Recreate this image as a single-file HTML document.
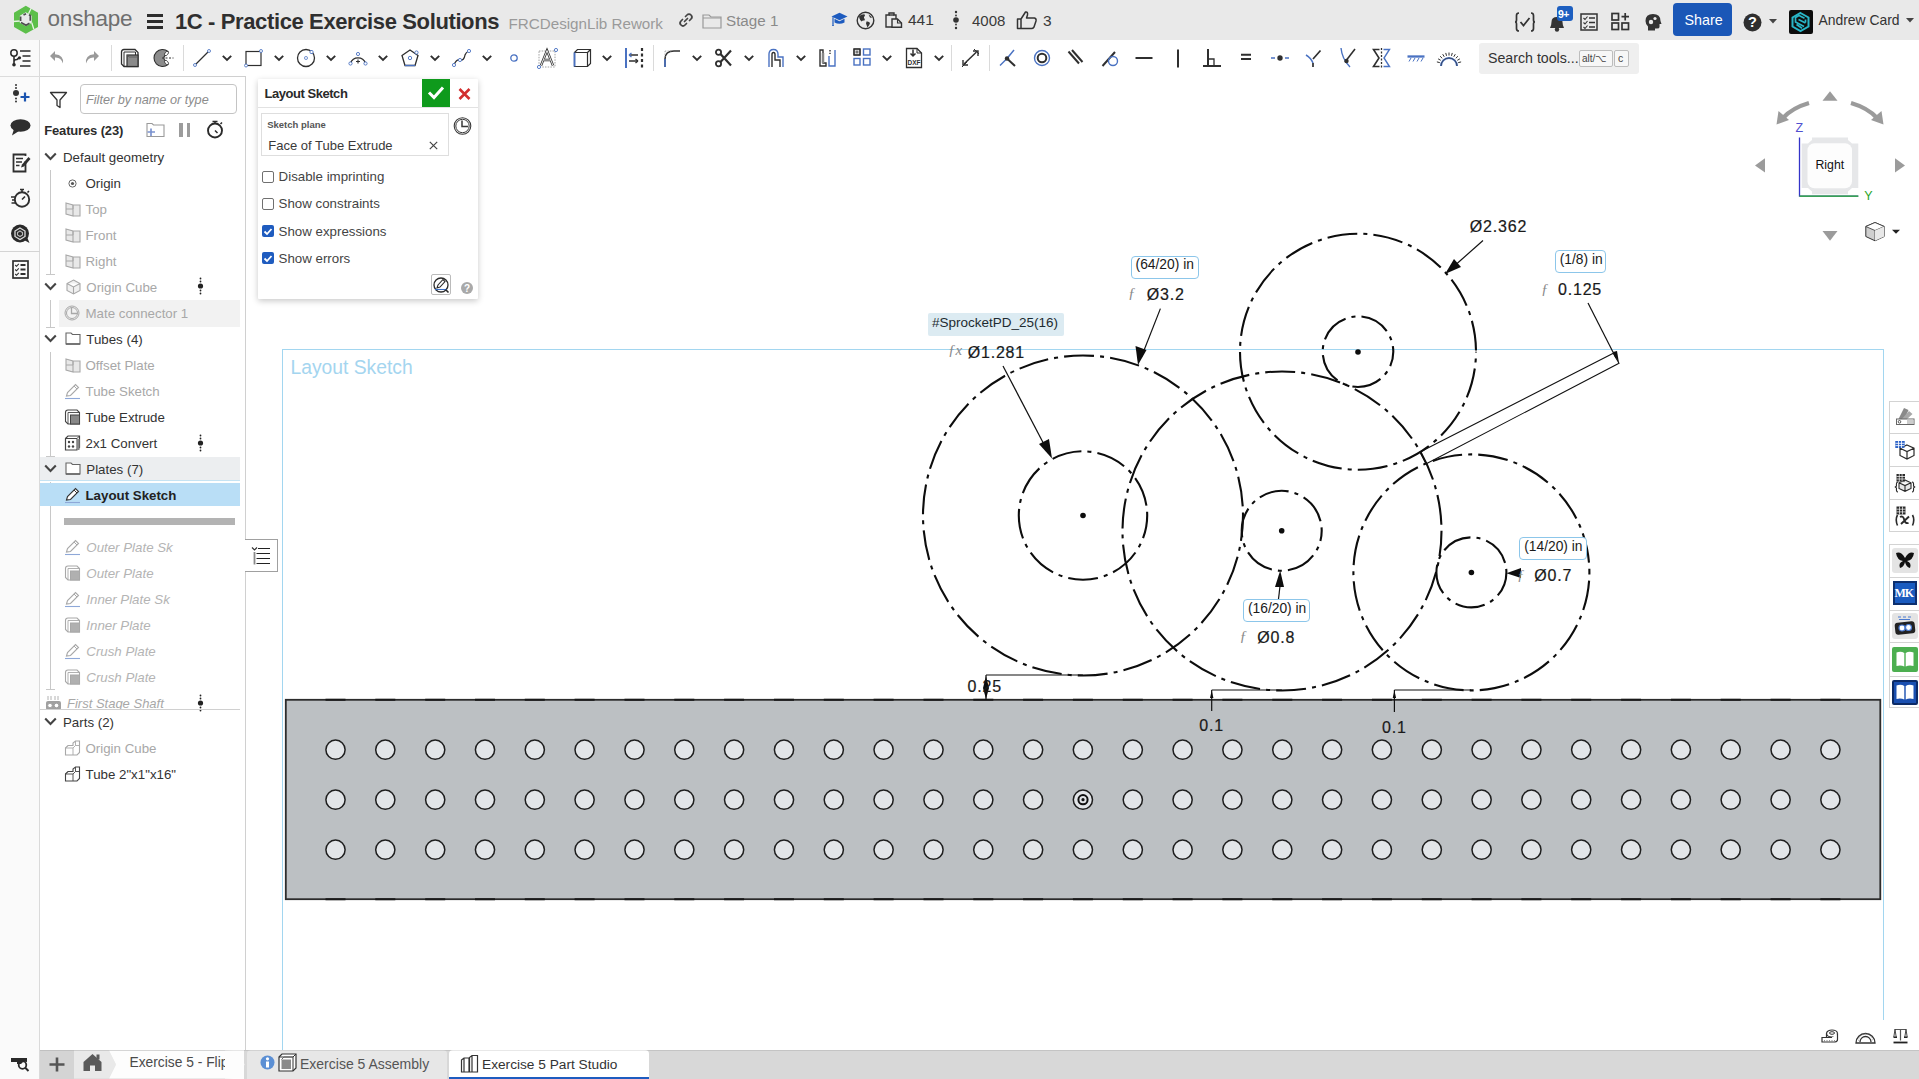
<!DOCTYPE html>
<html><head><meta charset="utf-8">
<style>
*{box-sizing:border-box;margin:0;padding:0}
html,body{width:1919px;height:1079px;overflow:hidden;background:#fff;font-family:"Liberation Sans",sans-serif;color:#333}
.a{position:absolute}
.t{position:absolute;white-space:nowrap;line-height:1}
svg{position:absolute;overflow:visible}
.dimv{font-size:16px;color:#1a1a1a;letter-spacing:0.8px;-webkit-text-stroke:0.2px #1a1a1a;margin-left:-1px}
.dime{font-size:13.8px;color:#1a1a1a}
.dimf{font-size:15px;color:#8a8a8a;font-family:"Liberation Serif",serif;font-style:italic}
.exbox{background:#fff;border:1.3px solid #8cc6ea;border-radius:4px}

</style></head><body>
<!-- top bar -->
<div class="a" style="left:0;top:0;width:1919px;height:40px;background:#e9e9e9"></div>
<!-- logo -->
<svg style="left:8px;top:2px" width="36" height="36" viewBox="0 0 36 36">
<path d="M17.8 3.7 L30 10.7 V25 L17.8 31.7 L6 25 V10.7 Z M17.8 10.2 L23.8 13.7 V20.8 L17.8 24.3 L11.8 20.8 V13.7 Z" fill="#5cbf4a" fill-rule="evenodd"/>
<path d="M20.5 11.7 L23.2 6.3 M23.8 20.8 L25.8 27.2 M11.8 19 L5 19.5" stroke="#e8f5e4" stroke-width="1.3"/>
<path d="M15.5 13 L18 11.7 M21 12.7 L22.3 13.5 V18.7 M21.5 21.3 L18 23.2 L13 20.5 M12.6 19 V14.5" fill="none" stroke="#4e4e4e" stroke-width="1.7"/>
</svg>
<div class="t" style="left:47.5px;top:7.5px;font-size:22.5px;color:#6f6f6f;letter-spacing:-0.2px">onshape</div>
<!-- hamburger -->
<div class="a" style="left:147px;top:14px;width:16px;height:3px;background:#2d2d2d"></div>
<div class="a" style="left:147px;top:19.5px;width:16px;height:3px;background:#2d2d2d"></div>
<div class="a" style="left:147px;top:25.5px;width:16px;height:3px;background:#2d2d2d"></div>
<div class="t" style="left:175px;top:11px;font-size:22px;font-weight:bold;color:#2f2f2f;letter-spacing:-0.38px">1C - Practice Exercise Solutions</div>
<div class="t" style="left:508.5px;top:16px;font-size:15.2px;color:#9a9a9a">FRCDesignLib Rework</div>
<!-- link icon -->
<svg style="left:678px;top:12px" width="16" height="16" viewBox="0 0 16 16">
<g fill="none" stroke="#444" stroke-width="1.7" stroke-linecap="round">
<path d="M6.5 9.5 L9.5 6.5"/>
<path d="M7.5 4.5 L9 3 A2.5 2.5 0 0 1 13 7 L11.5 8.5"/>
<path d="M8.5 11.5 L7 13 A2.5 2.5 0 0 1 3 9 L4.5 7.5"/>
</g></svg>
<!-- folder -->
<svg style="left:702px;top:13px" width="20" height="16" viewBox="0 0 20 16">
<path d="M1 2 H7 L9 4 H19 V15 H1 Z" fill="none" stroke="#999" stroke-width="1.2"/>
<path d="M1 5 H19" stroke="#999" stroke-width="1"/>
</svg>
<div class="t" style="left:726px;top:13px;font-size:15.2px;color:#8a8a8a">Stage 1</div>
<!-- grad cap -->
<svg style="left:831px;top:12px" width="17" height="15" viewBox="0 0 17 15">
<path d="M8.5 0.8 L16.5 4.5 L8.5 8.2 L0.5 4.5 Z" fill="#1d5bbf"/>
<path d="M3.5 6.8 V10.5 Q8.5 13 13.5 10.5 V6.8 L8.5 9.3 Z" fill="#1d5bbf"/>
<path d="M2 5.2 V12.5" stroke="#1d5bbf" stroke-width="1.2"/><path d="M1 14 L2 11.5 L3 14 Z" fill="#1d5bbf"/>
</svg>
<!-- globe -->
<svg style="left:856px;top:11px" width="19" height="19" viewBox="0 0 19 19">
<circle cx="9.5" cy="9.5" r="8.3" fill="none" stroke="#333" stroke-width="1.4"/>
<path d="M3 5.5 Q5 3 8.5 3.2 L9 5 Q7.5 5.5 8 7 Q9.5 8 8.5 9.5 Q6.5 9 5.5 10.5 Q4 9 3.5 7.5 Z" fill="#333"/>
<path d="M10.5 10.5 Q13 10 14 12 Q13.5 14.5 11.5 16.5 Q10.5 14 10 12.5 Z M12.5 3.5 Q15 4.5 16 7 L14 6.5 Z" fill="#333"/>
</svg>
<!-- copies icon -->
<svg style="left:884.5px;top:12px" width="18" height="16" viewBox="0 0 18 16">
<path d="M1 3 H4 V1 H9 V3 H11 V15 H1 Z" fill="none" stroke="#333" stroke-width="1.4"/>
<path d="M4 3 H9" stroke="#333" stroke-width="1.4"/>
<path d="M7 7 H12.5 L16.5 11 V15.3 H7 Z" fill="#e9e9e9" stroke="#333" stroke-width="1.4"/>
<path d="M12.5 7 V11 H16.5" fill="none" stroke="#333" stroke-width="1.1"/>
</svg>
<div class="t" style="left:908px;top:12px;font-size:15.5px;color:#3a3a3a">441</div>
<!-- vertical dots -->
<svg style="left:952px;top:10px" width="8" height="20" viewBox="0 0 8 20">
<circle cx="4" cy="2" r="1.2" fill="#333"/><circle cx="4" cy="10" r="2.8" fill="#333"/><circle cx="4" cy="18" r="1.2" fill="#333"/>
<circle cx="4" cy="5.5" r="0.9" fill="#333"/><circle cx="4" cy="14.5" r="0.9" fill="#333"/>
</svg>
<div class="t" style="left:972px;top:12.5px;font-size:15px;color:#3a3a3a">4008</div>
<!-- thumb -->
<svg style="left:1016px;top:10px" width="22" height="20" viewBox="0 0 22 20">
<path d="M1.5 9 H5 V18.5 H1.5 Z M5 9 L9.5 2 Q12 1.5 11.5 5 L10.5 8 H18.5 Q20.5 8.5 20 11 L18 17 Q17 18.5 15.5 18.5 H5" fill="none" stroke="#333" stroke-width="1.5" stroke-linejoin="round"/>
</svg>
<div class="t" style="left:1043px;top:12.5px;font-size:15.5px;color:#3a3a3a">3</div>

<!-- right side -->
<svg style="left:1514px;top:12px" width="22" height="20" viewBox="0 0 22 20"><path d="M5 1 Q2.5 1 2.5 3.5 V8 Q2.5 10 1 10 Q2.5 10 2.5 12 V16.5 Q2.5 19 5 19 M17 1 Q19.5 1 19.5 3.5 V8 Q19.5 10 21 10 Q19.5 10 19.5 12 V16.5 Q19.5 19 17 19" fill="none" stroke="#333" stroke-width="1.7"/><path d="M6.5 10 L9.5 13.5 L15.5 6" fill="none" stroke="#333" stroke-width="1.8"/></svg>
<svg style="left:1547px;top:14px" width="20" height="18" viewBox="0 0 20 18">
<path d="M3 14 Q4.5 11 4.5 8 Q4.5 3 10 3 Q15.5 3 15.5 8 Q15.5 11 17 14 Z" fill="#333"/>
<circle cx="10" cy="15.5" r="2.2" fill="#333"/>
</svg>
<div class="a" style="left:1557px;top:6px;width:16px;height:15px;background:#1d5fc0;border-radius:3px"></div>
<div class="t" style="left:1558px;top:8.5px;font-size:10.5px;font-weight:bold;color:#fff;letter-spacing:-0.5px">9+</div>
<svg style="left:1580px;top:13px" width="18" height="18" viewBox="0 0 18 18">
<rect x="1" y="1" width="16" height="16" fill="none" stroke="#333" stroke-width="1.5"/>
<path d="M3.5 5 L5 6.5 L7.5 3.5 M3.5 9.5 L5 11 L7.5 8 M3.5 14 L5 15.5 L7.5 12.5" fill="none" stroke="#333" stroke-width="1.1"/>
<path d="M9 5 H15 M9 9.5 H15 M9 14 H15" stroke="#333" stroke-width="1.5"/>
</svg>
<svg style="left:1611px;top:12px" width="20" height="19" viewBox="0 0 20 19">
<g fill="none" stroke="#333" stroke-width="1.7">
<rect x="1" y="1.5" width="6.5" height="6.5"/><rect x="1" y="11" width="6.5" height="6.5"/><rect x="11" y="11" width="6.5" height="6.5"/>
<path d="M14.2 1 V8.5 M10.5 4.7 H18"/>
</g></svg>
<svg style="left:1644px;top:13px" width="18" height="18" viewBox="0 0 18 18">
<path d="M9 1 Q16.5 1 16.5 8 L17.5 11 H15.5 V14 Q15.5 15.5 13 15.5 H11 V17.5 H4 V13.5 Q1.5 11 1.5 8 Q1.5 1 9 1 Z" fill="#333"/>
<circle cx="7" cy="9" r="2.2" fill="#e9e9e9"/><circle cx="11" cy="5.5" r="1.6" fill="#e9e9e9"/>
</svg>
<div class="a" style="left:1673px;top:3.3px;width:59px;height:32.3px;background:#1a57b7;border-radius:4px"></div>
<div class="t" style="left:1684.5px;top:13.3px;font-size:14.3px;color:#fff">Share</div>
<svg style="left:1742.5px;top:12.5px" width="19" height="19" viewBox="0 0 19 19">
<circle cx="9.5" cy="9.5" r="9" fill="#2f2f2f"/>
<text x="9.5" y="14.3" text-anchor="middle" font-family="Liberation Sans" font-weight="bold" font-size="14.5" fill="#fff">?</text>
</svg>
<svg style="left:1769px;top:19px" width="8" height="5" viewBox="0 0 8 5"><path d="M0 0 H8 L4 4.5 Z" fill="#444"/></svg>
<div class="a" style="left:1788.6px;top:9.8px;width:24px;height:24px;background:#0d0d0d;border-radius:2px"></div>
<svg style="left:1790px;top:11px" width="21" height="22" viewBox="0 0 21 22">
<path d="M10.5 2 L18.5 6.5 V15.5 L10.5 20 L2.5 15.5 V6.5 Z" fill="none" stroke="#29b6c8" stroke-width="2"/>
<path d="M14.5 7.2 L9 4.5 L5.5 6.5 V11 L14 15.5 M15.5 8.5 V11.5 M6.5 13.5 L12 17.3" fill="none" stroke="#29b6c8" stroke-width="1.7"/>
<path d="M8.5 8.5 L15.5 12" stroke="#29b6c8" stroke-width="1.7"/>
</svg>
<div class="t" style="left:1818.5px;top:14.3px;font-size:13.9px;color:#333">Andrew Card</div>
<svg style="left:1906px;top:18px" width="8" height="5" viewBox="0 0 8 5"><path d="M0 0 H8 L4 4.5 Z" fill="#444"/></svg>

<!-- left rail -->
<div class="a" style="left:0;top:40px;width:40px;height:1039px;background:#fafafa;border-right:1px solid #dadada"></div>
<!-- feature list icon in toolbar row -->
<svg style="left:10px;top:49px" width="21" height="18" viewBox="0 0 21 18">
<circle cx="4" cy="4" r="3.2" fill="none" stroke="#2b2b2b" stroke-width="1.5"/>
<path d="M4 7.2 V15.5 M4 12.5 Q4 10.5 7 10.5 L9 9" fill="none" stroke="#2b2b2b" stroke-width="1.6"/>
<circle cx="4" cy="15.8" r="1.8" fill="#2b2b2b"/><circle cx="9.5" cy="8.8" r="1.6" fill="#2b2b2b"/>
<path d="M10 2 H20.5 M12.5 7 H20.5 M12.5 12 H20.5 M10 17 H20.5" stroke="#2b2b2b" stroke-width="1.6"/>
</svg>
<div class="a" style="left:0;top:76px;width:40px;height:1px;background:#dcdcdc"></div>
<svg style="left:12px;top:84px" width="19" height="19" viewBox="0 0 19 19">
<circle cx="4" cy="1" r="1" fill="#333"/><circle cx="4" cy="4" r="1" fill="#333"/>
<circle cx="4" cy="9" r="3" fill="#333"/>
<circle cx="4" cy="14.5" r="1" fill="#333"/><circle cx="4" cy="17.5" r="1" fill="#333"/>
<path d="M8.5 13 H17.5 M13 8.5 V17.5" stroke="#1c55b0" stroke-width="2.2"/>
</svg>
<svg style="left:10px;top:119px" width="21" height="17" viewBox="0 0 21 17">
<ellipse cx="10.5" cy="6.5" rx="10" ry="6.2" fill="#2f2f2f"/>
<path d="M4 10 L2 16.5 L9 12 Z" fill="#2f2f2f"/>
</svg>
<svg style="left:12px;top:153px" width="19" height="20" viewBox="0 0 19 20">
<path d="M13.5 8 V18.5 H1.5 V1.5 H13.5 V3" fill="none" stroke="#2f2f2f" stroke-width="1.8"/>
<path d="M4 5.5 H11 M4 9 H10 M4 12.5 H7.5" stroke="#2f2f2f" stroke-width="1.6"/>
<path d="M9 14.5 L10 11.5 L16.5 4 L18.5 6 L12 13.5 Z" fill="#2f2f2f"/>
</svg>
<svg style="left:10px;top:188px" width="21" height="20" viewBox="0 0 21 20">
<circle cx="12" cy="11.5" r="7.2" fill="none" stroke="#2f2f2f" stroke-width="1.9"/>
<path d="M10 1.5 H14 M12 1.5 V4 M12 11.5 L15 8.5 M17.5 4.5 L19 3" stroke="#2f2f2f" stroke-width="1.6"/>
<path d="M1 9 H6 M2 12 H5 M1.5 15 H6" stroke="#2f2f2f" stroke-width="1.3"/>
</svg>
<svg style="left:10px;top:224px" width="21" height="20" viewBox="0 0 21 20">
<circle cx="10" cy="9.5" r="9" fill="#2a2a2a"/>
<path d="M14 16 L19.5 19 L17 13 Z" fill="#2a2a2a"/>
<path d="M10 4 L15 7 V12.5 L10 15.5 L5 12.5 V7 Z" fill="none" stroke="#ddd" stroke-width="1.3"/>
<path d="M10 7 L12.5 8.5 V11 L10 12.5 L7.5 11 V8.5 Z" fill="none" stroke="#bbb" stroke-width="1.1"/>
</svg>
<div class="a" style="left:0;top:251px;width:40px;height:1px;background:#d4d4d4"></div>
<svg style="left:12px;top:260px" width="17" height="19" viewBox="0 0 17 19">
<rect x="1" y="1" width="15" height="17" fill="none" stroke="#2f2f2f" stroke-width="1.7"/>
<path d="M3.2 5 L4.5 6.3 L6.8 3.8 M3.2 9.5 L4.5 10.8 L6.8 8.3 M3.2 14 L4.5 15.3 L6.8 12.8" fill="none" stroke="#2f2f2f" stroke-width="1.1"/>
<path d="M8.5 5 H13.5 M8.5 9.5 H13.5 M8.5 14 H13.5" stroke="#2f2f2f" stroke-width="1.8"/>
</svg>
<!-- bottom search icon -->
<svg style="left:10px;top:1057px" width="20" height="15" viewBox="0 0 20 15">
<path d="M1 1 H17 V5 Q13 4 11 7 H7 V5 H1 Z" fill="#2a2a2a"/>
<circle cx="12.5" cy="8" r="3.8" fill="none" stroke="#2a2a2a" stroke-width="1.8"/>
<path d="M15 10.5 L18.5 14" stroke="#2a2a2a" stroke-width="2"/>
</svg>

<!-- toolbar -->
<div class="a" style="left:40px;top:40px;width:1879px;height:37px;background:#fff"></div>
<svg style="left:49px;top:50px" width="16" height="15" viewBox="0 0 16 15"><path d="M6 1 L1 6 L6 11 V7.5 Q12 7 14 13.5 Q15 5 6 4.3 Z" fill="#9a9a9a"/></svg>
<svg style="left:84px;top:50px" width="16" height="15" viewBox="0 0 16 15"><path d="M10 1 L15 6 L10 11 V7.5 Q4 7 2 13.5 Q1 5 10 4.3 Z" fill="#9a9a9a"/></svg>
<div class="a" style="left:111px;top:45px;width:1.2px;height:26px;background:#dadada"></div>
<svg style="left:120px;top:48px" width="20" height="20" viewBox="0 0 20 20"><path d="M1.5 4 Q1.5 1.5 4 1.5 H15 L18 4.5 V18.5 H4 L1.5 16 Z" fill="#fff" stroke="#2f2f2f" stroke-width="1.3"/><path d="M4 4 H15.5 V18.5 M4 4 V18.5" fill="none" stroke="#2f2f2f" stroke-width="1"/><rect x="7" y="7" width="11" height="11.5" fill="#8a8a8a" stroke="#2f2f2f" stroke-width="1.2"/><path d="M7 7 L9 9 H18" fill="none" stroke="#555" stroke-width="0.8"/></svg>
<svg style="left:154px;top:48px" width="20" height="20" viewBox="0 0 20 20"><path d="M14 3.5 A8.5 8.5 0 1 0 14 16.5 L11 12.5 A3.5 3.5 0 0 1 11 7.5 Z" fill="#8c8c8c" stroke="#2f2f2f" stroke-width="1.1"/><ellipse cx="12.5" cy="5.5" rx="1.5" ry="2.5" transform="rotate(40 12.5 5.5)" fill="#fff" stroke="#2f2f2f" stroke-width="0.8"/><ellipse cx="12.5" cy="14.5" rx="1.5" ry="2.5" transform="rotate(-40 12.5 14.5)" fill="#fff" stroke="#2f2f2f" stroke-width="0.8"/><path d="M8 10 H19.5" stroke="#2f2f2f" stroke-width="1" stroke-dasharray="2 1.5"/></svg>
<div class="a" style="left:183px;top:45px;width:1.2px;height:26px;background:#dadada"></div>
<svg style="left:192px;top:48px" width="20" height="20" viewBox="0 0 20 20"><path d="M3.5 16.5 L16.5 3.5" stroke="#2f2f2f" stroke-width="1.2"/><circle cx="3" cy="17" r="1.5" fill="#fff" stroke="#4a72c2" stroke-width="0.85"/><circle cx="17" cy="3" r="1.5" fill="#fff" stroke="#4a72c2" stroke-width="0.85"/></svg>
<svg style="left:222px;top:55px" width="10" height="6" viewBox="0 0 10 6"><path d="M0.8 0.8 L5 5 L9.2 0.8" fill="none" stroke="#2f2f2f" stroke-width="1.9"/></svg>
<svg style="left:244px;top:48px" width="20" height="20" viewBox="0 0 20 20"><rect x="2" y="3.5" width="15" height="14" fill="none" stroke="#2f2f2f" stroke-width="1.2"/><circle cx="2" cy="17.5" r="1.5" fill="#fff" stroke="#4a72c2" stroke-width="0.85"/><circle cx="17" cy="3" r="1.5" fill="#fff" stroke="#4a72c2" stroke-width="0.85"/></svg>
<svg style="left:274px;top:55px" width="10" height="6" viewBox="0 0 10 6"><path d="M0.8 0.8 L5 5 L9.2 0.8" fill="none" stroke="#2f2f2f" stroke-width="1.9"/></svg>
<svg style="left:296px;top:48px" width="20" height="20" viewBox="0 0 20 20"><circle cx="10" cy="10" r="8.5" fill="none" stroke="#2f2f2f" stroke-width="1.3"/><rect x="8.6" y="8.6" width="2.8" height="2.8" rx="1" fill="none" stroke="#4a72c2" stroke-width="0.9"/><rect x="14" y="2.5" width="3" height="3" rx="1" fill="#fff" stroke="#4a72c2" stroke-width="0.9"/></svg>
<svg style="left:326px;top:55px" width="10" height="6" viewBox="0 0 10 6"><path d="M0.8 0.8 L5 5 L9.2 0.8" fill="none" stroke="#2f2f2f" stroke-width="1.9"/></svg>
<svg style="left:348px;top:48px" width="20" height="20" viewBox="0 0 20 20"><path d="M2.5 15 A8 8 0 0 1 17.5 15" fill="none" stroke="#2f2f2f" stroke-width="1.3"/><circle cx="2.5" cy="15.5" r="1.6" fill="#fff" stroke="#4a72c2" stroke-width="0.9"/><circle cx="17.5" cy="15.5" r="1.6" fill="#fff" stroke="#4a72c2" stroke-width="0.9"/><circle cx="10" cy="6" r="1.6" fill="#fff" stroke="#4a72c2" stroke-width="0.9"/><path d="M8 13.5 H12 M10 11.5 V15.5" stroke="#2f2f2f" stroke-width="1.1"/></svg>
<svg style="left:378px;top:55px" width="10" height="6" viewBox="0 0 10 6"><path d="M0.8 0.8 L5 5 L9.2 0.8" fill="none" stroke="#2f2f2f" stroke-width="1.9"/></svg>
<svg style="left:400px;top:48px" width="20" height="20" viewBox="0 0 20 20"><path d="M10 2 L18 7.5 L15 17.5 H5 L2 7.5 Z" fill="none" stroke="#2f2f2f" stroke-width="1.3"/><circle cx="10" cy="10" r="1.7" fill="none" stroke="#4a72c2" stroke-width="0.9"/><circle cx="16.5" cy="4.5" r="1.6" fill="#fff" stroke="#4a72c2" stroke-width="0.9"/><path d="M5 17.5 H15" stroke="#4a72c2" stroke-width="1.3"/></svg>
<svg style="left:430px;top:55px" width="10" height="6" viewBox="0 0 10 6"><path d="M0.8 0.8 L5 5 L9.2 0.8" fill="none" stroke="#2f2f2f" stroke-width="1.9"/></svg>
<svg style="left:451px;top:48px" width="21" height="20" viewBox="0 0 21 20"><path d="M3 17 Q5 11 9 12 Q13 13 14 7 Q15 4 18 3" fill="none" stroke="#2f2f2f" stroke-width="1.3"/><circle cx="3" cy="17" r="1.6" fill="#fff" stroke="#4a72c2" stroke-width="0.9"/><circle cx="9" cy="12" r="1.6" fill="#fff" stroke="#4a72c2" stroke-width="0.9"/><circle cx="18" cy="3" r="1.6" fill="#fff" stroke="#4a72c2" stroke-width="0.9"/></svg>
<svg style="left:482px;top:55px" width="10" height="6" viewBox="0 0 10 6"><path d="M0.8 0.8 L5 5 L9.2 0.8" fill="none" stroke="#2f2f2f" stroke-width="1.9"/></svg>
<svg style="left:509px;top:53px" width="10" height="10" viewBox="0 0 10 10"><circle cx="5" cy="5" r="3.2" fill="none" stroke="#4a72c2" stroke-width="1.3"/></svg>
<svg style="left:537px;top:48px" width="22" height="21" viewBox="0 0 22 21"><rect x="2" y="3" width="16" height="16" fill="none" stroke="#888" stroke-width="0.8" stroke-dasharray="1.5 1.2"/><path d="M4 17.5 L10 2.5 L16 17.5 M6.5 12 H13.5" fill="none" stroke="#2f2f2f" stroke-width="2.4"/><path d="M4 17.5 L10 2.5 L16 17.5 M6.5 12 H13.5" fill="none" stroke="#fff" stroke-width="0.9"/><circle cx="2" cy="19" r="1.6" fill="#fff" stroke="#4a72c2" stroke-width="0.9"/><circle cx="19" cy="2" r="1.6" fill="#fff" stroke="#4a72c2" stroke-width="0.9"/></svg>
<svg style="left:573px;top:48px" width="19" height="20" viewBox="0 0 19 20"><path d="M1.5 4.5 L4.5 1.5 H17.5 V15.5 L14.5 18.5 H1.5 Z M1.5 4.5 H14.5 V18.5 M14.5 4.5 L17.5 1.5" fill="none" stroke="#2f2f2f" stroke-width="1.2"/><path d="M1.5 4.5 V18.5" stroke="#4a72c2" stroke-width="1.8"/></svg>
<svg style="left:602px;top:55px" width="10" height="6" viewBox="0 0 10 6"><path d="M0.8 0.8 L5 5 L9.2 0.8" fill="none" stroke="#2f2f2f" stroke-width="1.9"/></svg>
<svg style="left:624px;top:47px" width="20" height="22" viewBox="0 0 20 22"><path d="M2 1 V21" stroke="#4a72c2" stroke-width="2"/><path d="M18 1 V21" stroke="#2f2f2f" stroke-width="2.2" stroke-dasharray="3 2.5"/><path d="M5 8 H14 M5 14 H14" stroke="#2f2f2f" stroke-width="1.3"/><path d="M5 8 L7.5 6 M5 8 L7.5 10" stroke="#4a72c2" stroke-width="1.3"/><path d="M14 14 L11.5 12 M14 14 L11.5 16" stroke="#2f2f2f" stroke-width="1.3"/></svg>
<div class="a" style="left:653px;top:45px;width:1.2px;height:26px;background:#dadada"></div>
<svg style="left:663px;top:48px" width="18" height="20" viewBox="0 0 18 20"><path d="M2 19 V11 Q2 3 11 3 H17" fill="none" stroke="#2f2f2f" stroke-width="1.6"/><path d="M2 11 V19" stroke="#4a72c2" stroke-width="1.6"/><path d="M2 3 H9 M2 3 V9" stroke="#999" stroke-width="0.8" stroke-dasharray="1.3 1.2"/></svg>
<svg style="left:692px;top:55px" width="10" height="6" viewBox="0 0 10 6"><path d="M0.8 0.8 L5 5 L9.2 0.8" fill="none" stroke="#2f2f2f" stroke-width="1.9"/></svg>
<svg style="left:715px;top:48px" width="17" height="20" viewBox="0 0 17 20"><path d="M5.5 6 L16 17.5 M5.5 14 L16 2.5" stroke="#2f2f2f" stroke-width="2.2"/><circle cx="3.5" cy="4.2" r="2.6" fill="#fff" stroke="#2f2f2f" stroke-width="1.8"/><circle cx="3.5" cy="15.8" r="2.6" fill="#fff" stroke="#2f2f2f" stroke-width="1.8"/></svg>
<svg style="left:744px;top:55px" width="10" height="6" viewBox="0 0 10 6"><path d="M0.8 0.8 L5 5 L9.2 0.8" fill="none" stroke="#2f2f2f" stroke-width="1.9"/></svg>
<svg style="left:767px;top:48px" width="18" height="20" viewBox="0 0 18 20"><path d="M2 19 V6 Q2 1.5 6.5 1.5 Q11 1.5 11 6 V9 H16 V19" fill="none" stroke="#4a72c2" stroke-width="1.4"/><path d="M5 19 V6.5 Q5 4.5 6.5 4.5 Q8 4.5 8 6.5 V12 H13 V19" fill="none" stroke="#2f2f2f" stroke-width="1.4"/></svg>
<svg style="left:796px;top:55px" width="10" height="6" viewBox="0 0 10 6"><path d="M0.8 0.8 L5 5 L9.2 0.8" fill="none" stroke="#2f2f2f" stroke-width="1.9"/></svg>
<svg style="left:818px;top:48px" width="20" height="20" viewBox="0 0 20 20"><path d="M2 2 V18 H8 V15 H5 V2 Z" fill="#fff" stroke="#2f2f2f" stroke-width="1.4"/><path d="M11 8 V18 H17 V2" fill="none" stroke="#4a72c2" stroke-width="1.4"/><path d="M12 2 V6" stroke="#2f2f2f" stroke-width="1.4" stroke-dasharray="1.5 1.2"/><path d="M5 5 V15" stroke="#888" stroke-width="2.5"/></svg>
<svg style="left:853px;top:48px" width="18" height="18" viewBox="0 0 18 18"><rect x="1" y="1" width="6" height="6" fill="#fff" stroke="#2f2f2f" stroke-width="1.2"/><rect x="1" y="1" width="6" height="6" fill="none" stroke="#2f2f2f" stroke-width="1.2"/><rect x="2.5" y="2.5" width="3" height="3" fill="#777"/><rect x="10.5" y="1" width="6.5" height="6" fill="none" stroke="#4a72c2" stroke-width="1.4"/><rect x="1" y="10.5" width="6" height="6.5" fill="none" stroke="#4a72c2" stroke-width="1.4"/><rect x="10.5" y="10.5" width="6.5" height="6.5" fill="none" stroke="#4a72c2" stroke-width="1.4"/></svg>
<svg style="left:882px;top:55px" width="10" height="6" viewBox="0 0 10 6"><path d="M0.8 0.8 L5 5 L9.2 0.8" fill="none" stroke="#2f2f2f" stroke-width="1.9"/></svg>
<svg style="left:905px;top:47px" width="18" height="22" viewBox="0 0 18 22"><path d="M1.5 1.5 H12 L16.5 6 V20.5 H1.5 Z" fill="#fff" stroke="#2f2f2f" stroke-width="1.3"/><path d="M12 1.5 V6 H16.5" fill="none" stroke="#2f2f2f" stroke-width="1"/><path d="M8 2.5 V9 M5.5 6.5 L8 9 L10.5 6.5" fill="none" stroke="#2f2f2f" stroke-width="1.5"/><text x="9" y="18" text-anchor="middle" font-family="Liberation Sans" font-weight="bold" font-size="6.5" fill="#2f2f2f">DXF</text></svg>
<svg style="left:934px;top:55px" width="10" height="6" viewBox="0 0 10 6"><path d="M0.8 0.8 L5 5 L9.2 0.8" fill="none" stroke="#2f2f2f" stroke-width="1.9"/></svg>
<div class="a" style="left:951px;top:45px;width:1.2px;height:26px;background:#dadada"></div>
<svg style="left:961px;top:48px" width="19" height="20" viewBox="0 0 19 20"><path d="M3 16 L15.5 4" stroke="#2f2f2f" stroke-width="1.5"/><path d="M2 12 V17 H7 M12 3 H17 V8" fill="none" stroke="#2f2f2f" stroke-width="1.4"/><path d="M1 19 L6 14 M13 1 L18 6" stroke="#2f2f2f" stroke-width="1"/></svg>
<div class="a" style="left:989px;top:45px;width:1.2px;height:26px;background:#dadada"></div>
<svg style="left:998px;top:48px" width="19" height="20" viewBox="0 0 19 20"><path d="M2 17.5 L9 10.5" stroke="#4a72c2" stroke-width="1.5"/><path d="M9 10.5 L17 18" stroke="#2f2f2f" stroke-width="2"/><path d="M9 10.5 L16 2" stroke="#4a72c2" stroke-width="1.5"/><circle cx="9" cy="10.5" r="2.2" fill="#2f2f2f"/></svg>
<svg style="left:1033px;top:49px" width="18" height="18" viewBox="0 0 18 18"><circle cx="9" cy="9" r="7.5" fill="none" stroke="#4a72c2" stroke-width="1.4"/><circle cx="9" cy="9" r="4.3" fill="none" stroke="#2f2f2f" stroke-width="2"/></svg>
<svg style="left:1067px;top:48px" width="17" height="20" viewBox="0 0 17 20"><path d="M1.5 3.5 L12 15.5" stroke="#2f2f2f" stroke-width="2"/><path d="M5 2 L15.5 14" stroke="#2f2f2f" stroke-width="2"/></svg>
<svg style="left:1101px;top:48px" width="18" height="20" viewBox="0 0 18 20"><path d="M1.5 18 L14 4" stroke="#2f2f2f" stroke-width="2"/><circle cx="12" cy="13" r="4.5" fill="none" stroke="#4a72c2" stroke-width="1.4"/></svg>
<svg style="left:1135px;top:56px" width="18" height="4" viewBox="0 0 18 4"><path d="M0.5 2 H17.5" stroke="#2f2f2f" stroke-width="2"/></svg>
<svg style="left:1176px;top:49px" width="4" height="19" viewBox="0 0 4 19"><path d="M2 0.5 V18.5" stroke="#2f2f2f" stroke-width="2"/></svg>
<svg style="left:1202px;top:48px" width="20" height="20" viewBox="0 0 20 20"><path d="M1 18 H19" stroke="#2f2f2f" stroke-width="2"/><path d="M6 1 V18" stroke="#2f2f2f" stroke-width="2"/><path d="M6 11 H12 V18" fill="none" stroke="#2f2f2f" stroke-width="1.3"/></svg>
<svg style="left:1240px;top:53px" width="12" height="8" viewBox="0 0 12 8"><path d="M1 1.8 H11 M1 6 H11" stroke="#2f2f2f" stroke-width="2"/></svg>
<svg style="left:1270px;top:54px" width="20" height="8" viewBox="0 0 20 8"><path d="M1 4 H5 M15 4 H19" stroke="#4a72c2" stroke-width="1.4"/><circle cx="10" cy="4" r="2.7" fill="#2f2f2f"/></svg>
<svg style="left:1305px;top:48px" width="17" height="20" viewBox="0 0 17 20"><path d="M1 7 Q6 10 8 15" fill="none" stroke="#4a72c2" stroke-width="1.5"/><path d="M8 15 V19 M8 11 L15.5 2.5" stroke="#2f2f2f" stroke-width="1.7"/></svg>
<svg style="left:1339px;top:47px" width="19" height="22" viewBox="0 0 19 22"><path d="M2 1 Q3 12 11 20" fill="none" stroke="#4a72c2" stroke-width="1.4"/><path d="M6 15 L16 2" stroke="#2f2f2f" stroke-width="1.6"/><circle cx="7.5" cy="14" r="2.2" fill="#2f2f2f"/></svg>
<svg style="left:1372px;top:48px" width="19" height="20" viewBox="0 0 19 20"><path d="M7.5 1.5 H1.5 L7 10 L1.5 18.5 H7.5" fill="none" stroke="#2f2f2f" stroke-width="1.6"/><path d="M11.5 1.5 H17.5 L12 10 L17.5 18.5 H11.5" fill="none" stroke="#4a72c2" stroke-width="1.4"/><path d="M9.5 0 V20" stroke="#2f2f2f" stroke-width="1.3" stroke-dasharray="2 1.5"/></svg>
<svg style="left:1407px;top:55px" width="18" height="7" viewBox="0 0 18 7"><path d="M0.5 1.5 H17.5" stroke="#4a72c2" stroke-width="2.3"/><path d="M2 6.5 L4 3 M6 6.5 L8 3 M10 6.5 L12 3 M14 6.5 L16 3" stroke="#4a72c2" stroke-width="1"/></svg>
<svg style="left:1438px;top:46px" width="22" height="23" viewBox="0 0 22 23"><path d="M3 20 A8 8 0 0 1 19 20" fill="none" stroke="#4a72c2" stroke-width="2"/><path d="M3 20 A8 8 0 0 1 19 20" fill="none" stroke="#2f2f2f" stroke-width="0.6"/><g stroke="#2f2f2f" stroke-width="1"><path d="M20.20 16.65 L23.11 15.91"/><path d="M19.27 14.33 L21.88 12.85"/><path d="M17.77 12.33 L19.90 10.23"/><path d="M15.79 10.80 L17.31 8.21"/><path d="M13.49 9.83 L14.27 6.94"/><path d="M11.01 9.50 L11.01 6.50"/><path d="M8.53 9.83 L7.75 6.93"/><path d="M6.22 10.79 L4.71 8.20"/><path d="M4.24 12.32 L2.11 10.21"/><path d="M2.73 14.32 L0.12 12.84"/><path d="M1.80 16.64 L-1.11 15.89"/></g></svg>
<div class="a" style="left:1478.5px;top:42.5px;width:160.5px;height:31px;background:#efefef;border-radius:3px"></div>
<div class="t" style="left:1488px;top:51px;font-size:14.2px;color:#333">Search tools...</div>
<div class="a" style="left:1579px;top:50px;width:33.5px;height:17px;border:1px solid #bdbdbd;border-radius:2px;background:#f7f7f7"></div>
<div class="t" style="left:1582px;top:54px;font-size:10px;color:#444">alt/⌥</div>
<div class="a" style="left:1613.5px;top:50px;width:15.5px;height:17px;border:1px solid #bdbdbd;border-radius:2px;background:#f7f7f7"></div>
<div class="t" style="left:1618px;top:53px;font-size:10.5px;color:#444">c</div>
<!-- feature panel -->
<div class="a" style="left:40px;top:76px;width:206px;height:974px;background:#fff;border-right:1px solid #d0d0d0;border-top:1px solid #d0d0d0"></div>
<svg style="left:49px;top:91px" width="19" height="18" viewBox="0 0 19 18"><path d="M1.5 1.5 H17.5 L11 9 V16.5 L8 14.5 V9 Z" fill="none" stroke="#333" stroke-width="1.3" stroke-linejoin="round"/></svg>
<div class="a" style="left:79.5px;top:84.4px;width:157px;height:29.8px;border:1px solid #c4c4c4;border-radius:4px;background:#fff"></div>
<div class="t" style="left:86px;top:93.5px;font-size:12.7px;color:#8c8c8c;font-style:italic">Filter by name or type</div>
<div class="t" style="left:44.2px;top:123.5px;font-size:13px;color:#2c2c2c;font-weight:bold;letter-spacing:-0.15px">Features (23)</div>
<svg style="left:145.5px;top:122px" width="19" height="16" viewBox="0 0 19 16"><path d="M1 1.5 H6 L7.5 3 H18 V14.5 H1 Z" fill="none" stroke="#9a9a9a" stroke-width="1.1"/><path d="M1.5 10 H9 M5 6.5 V14" stroke="#7b93cf" stroke-width="1.7"/></svg>
<div class="a" style="left:179px;top:123px;width:3.5px;height:14px;background:#9c9c9c"></div><div class="a" style="left:186.5px;top:123px;width:3.5px;height:14px;background:#9c9c9c"></div>
<svg style="left:206px;top:120px" width="18" height="19" viewBox="0 0 18 19"><circle cx="9" cy="10.5" r="7" fill="none" stroke="#2b2b2b" stroke-width="1.9"/><path d="M6.5 1.5 H11.5 M9 1.5 V3.5 M9 10.5 L11.5 13 M14.5 4 L16 2.5" stroke="#2b2b2b" stroke-width="1.5"/></svg>
<div class="a" style="left:49.5px;top:170px;width:1px;height:103.5px;background:#c8c8c8"></div><div class="a" style="left:45.5px;top:273.5px;width:9px;height:1px;background:#c8c8c8"></div>
<div class="a" style="left:49.5px;top:300px;width:1px;height:26.5px;background:#c8c8c8"></div><div class="a" style="left:45.5px;top:326.5px;width:9px;height:1px;background:#c8c8c8"></div>
<div class="a" style="left:49.5px;top:352px;width:1px;height:103.5px;background:#c8c8c8"></div><div class="a" style="left:45.5px;top:455.5px;width:9px;height:1px;background:#c8c8c8"></div>
<div class="a" style="left:49.5px;top:482px;width:1px;height:207px;background:#c8c8c8"></div><div class="a" style="left:45.5px;top:689px;width:9px;height:1px;background:#c8c8c8"></div>
<svg style="left:44px;top:152px" width="13" height="9" viewBox="0 0 13 9"><path d="M1.2 1.5 L6.5 7 L11.8 1.5" fill="none" stroke="#444" stroke-width="2.1"/></svg>
<div class="t" style="left:63px;top:150.6px;font-size:13.3px;color:#333;">Default geometry</div>
<svg style="left:68px;top:179px" width="9" height="9" viewBox="0 0 9 9"><circle cx="4.5" cy="4.5" r="3.6" fill="none" stroke="#555" stroke-width="0.9"/><circle cx="4.5" cy="4.5" r="1.6" fill="#555"/></svg>
<div class="t" style="left:85.5px;top:176.6px;font-size:13.3px;color:#333;">Origin</div>
<svg style="left:65px;top:202px" width="16" height="15" viewBox="0 0 16 15"><path d="M1 1 L8 3 V14 L1 12 Z M8 3 H15 V14 H8" fill="#e8e8e8" stroke="#a8a8a8" stroke-width="1.1"/><path d="M1 7 H8 L8 3" fill="none" stroke="#a8a8a8" stroke-width="1"/></svg>
<div class="t" style="left:85.5px;top:202.6px;font-size:13.3px;color:#a8a8a8;">Top</div>
<svg style="left:65px;top:228px" width="16" height="15" viewBox="0 0 16 15"><path d="M1 1 L8 3 V14 L1 12 Z M8 3 H15 V14 H8" fill="#e8e8e8" stroke="#a8a8a8" stroke-width="1.1"/><path d="M1 7 H8 L8 3" fill="none" stroke="#a8a8a8" stroke-width="1"/></svg>
<div class="t" style="left:85.5px;top:228.6px;font-size:13.3px;color:#a8a8a8;">Front</div>
<svg style="left:65px;top:254px" width="16" height="15" viewBox="0 0 16 15"><path d="M1 1 L8 3 V14 L1 12 Z M8 3 H15 V14 H8" fill="#e8e8e8" stroke="#a8a8a8" stroke-width="1.1"/><path d="M1 7 H8 L8 3" fill="none" stroke="#a8a8a8" stroke-width="1"/></svg>
<div class="t" style="left:85.5px;top:254.6px;font-size:13.3px;color:#a8a8a8;">Right</div>
<svg style="left:44px;top:282px" width="13" height="9" viewBox="0 0 13 9"><path d="M1.2 1.5 L6.5 7 L11.8 1.5" fill="none" stroke="#444" stroke-width="2.1"/></svg>
<svg style="left:66px;top:279px" width="15" height="16" viewBox="0 0 15 16"><path d="M7.5 1 L14 4.5 V11.5 L7.5 15 L1 11.5 V4.5 Z M1 4.5 L7.5 8 L14 4.5 M7.5 8 V15" fill="#f0f0f0" stroke="#a8a8a8" stroke-width="1.1"/></svg>
<div class="t" style="left:86.3px;top:280.6px;font-size:13.3px;color:#a8a8a8;">Origin Cube</div>
<svg style="left:197px;top:277px" width="7" height="18" viewBox="0 0 7 18"><circle cx="3.5" cy="1.5" r="0.9" fill="#222"/><circle cx="3.5" cy="4.5" r="0.9" fill="#222"/><circle cx="3.5" cy="9" r="2.6" fill="#222"/><circle cx="3.5" cy="13.5" r="0.9" fill="#222"/><circle cx="3.5" cy="16.5" r="0.9" fill="#222"/></svg>
<div class="a" style="left:59px;top:300px;width:181px;height:26.5px;background:#f2f2f2"></div>
<svg style="left:64px;top:305px" width="16" height="16" viewBox="0 0 16 16"><circle cx="8" cy="8" r="7" fill="none" stroke="#a8a8a8" stroke-width="1"/><circle cx="8" cy="8" r="5.5" fill="none" stroke="#a8a8a8" stroke-width="1"/><path d="M7.5 3 V8.5 H13" fill="none" stroke="#a8a8a8" stroke-width="1.3"/></svg>
<div class="t" style="left:85.5px;top:306.6px;font-size:13.3px;color:#a8a8a8;">Mate connector 1</div>
<svg style="left:44px;top:334px" width="13" height="9" viewBox="0 0 13 9"><path d="M1.2 1.5 L6.5 7 L11.8 1.5" fill="none" stroke="#444" stroke-width="2.1"/></svg>
<svg style="left:65px;top:332px" width="16" height="13" viewBox="0 0 16 13"><path d="M1 1 H6 L7.5 2.5 H15 V12 H1 Z" fill="#fff" stroke="#666" stroke-width="1.1"/><path d="M1 12 H15" stroke="#666" stroke-width="1.6"/></svg>
<div class="t" style="left:86.3px;top:332.6px;font-size:13.3px;color:#333;">Tubes (4)</div>
<svg style="left:65px;top:358px" width="16" height="15" viewBox="0 0 16 15"><path d="M1 1 L8 3 V14 L1 12 Z M8 3 H15 V14 H8" fill="#e8e8e8" stroke="#a8a8a8" stroke-width="1.1"/><path d="M1 7 H8 L8 3" fill="none" stroke="#a8a8a8" stroke-width="1"/></svg>
<div class="t" style="left:85.5px;top:358.6px;font-size:13.3px;color:#a8a8a8;">Offset Plate</div>
<svg style="left:64px;top:383px" width="17" height="17" viewBox="0 0 17 17"><path d="M2.5 13 L3.5 9.5 L11.5 1.5 L14.5 4.5 L6.5 12.5 Z" fill="#fff" stroke="#a8a8a8" stroke-width="1.1"/><path d="M1 15.5 H16" stroke="#8ea8d8" stroke-width="1.1"/><path d="M10 3 L13 6" stroke="#a8a8a8" stroke-width="1"/></svg>
<div class="t" style="left:85.5px;top:384.6px;font-size:13.3px;color:#a8a8a8;">Tube Sketch</div>
<svg style="left:64px;top:409px" width="17" height="16" viewBox="0 0 17 16"><path d="M1.5 3.5 Q1.5 1 4 1 H13 L15.5 3.5 V15 H4 L1.5 12.5 Z" fill="#fff" stroke="#444" stroke-width="1.1"/><path d="M4 3.5 H15.5 M4 3.5 V15" fill="none" stroke="#444" stroke-width="0.9"/><rect x="6.5" y="6" width="9" height="9" fill="#888" stroke="#444" stroke-width="1"/></svg>
<div class="t" style="left:85.5px;top:410.6px;font-size:13.3px;color:#333;">Tube Extrude</div>
<svg style="left:64px;top:435px" width="17" height="16" viewBox="0 0 17 16"><path d="M1.5 3.5 L4 1 H15.5 V12.5 L13 15 H1.5 Z" fill="#fff" stroke="#444" stroke-width="1.2"/><path d="M1.5 3.5 H13 V15 M13 3.5 L15.5 1" fill="none" stroke="#444" stroke-width="1"/><rect x="13" y="4" width="2.5" height="11" fill="#888"/><circle cx="5" cy="7" r="1.2" fill="#444"/><circle cx="9" cy="7" r="1.2" fill="#444"/><circle cx="5" cy="11.5" r="1.2" fill="#444"/><circle cx="9" cy="11.5" r="1.2" fill="#444"/></svg>
<div class="t" style="left:85.5px;top:436.6px;font-size:13.3px;color:#333;">2x1 Convert</div>
<svg style="left:197px;top:434px" width="7" height="18" viewBox="0 0 7 18"><circle cx="3.5" cy="1.5" r="0.9" fill="#222"/><circle cx="3.5" cy="4.5" r="0.9" fill="#222"/><circle cx="3.5" cy="9" r="2.6" fill="#222"/><circle cx="3.5" cy="13.5" r="0.9" fill="#222"/><circle cx="3.5" cy="16.5" r="0.9" fill="#222"/></svg>
<div class="a" style="left:40px;top:457.3px;width:200px;height:22.5px;background:#eceef0"></div>
<div class="a" style="left:40px;top:479.8px;width:200px;height:1px;background:#c5e3f3"></div>
<svg style="left:44px;top:464px" width="13" height="9" viewBox="0 0 13 9"><path d="M1.2 1.5 L6.5 7 L11.8 1.5" fill="none" stroke="#444" stroke-width="2.1"/></svg>
<svg style="left:65px;top:462px" width="16" height="13" viewBox="0 0 16 13"><path d="M1 1 H6 L7.5 2.5 H15 V12 H1 Z" fill="#fff" stroke="#666" stroke-width="1.1"/><path d="M1 12 H15" stroke="#666" stroke-width="1.6"/></svg>
<div class="t" style="left:86.3px;top:462.6px;font-size:13.3px;color:#333;">Plates (7)</div>
<div class="a" style="left:40px;top:483px;width:200px;height:23px;background:#b9def6"></div>
<svg style="left:64px;top:487px" width="17" height="17" viewBox="0 0 17 17"><path d="M2.5 13 L3.5 9.5 L11.5 1.5 L14.5 4.5 L6.5 12.5 Z" fill="#fff" stroke="#333" stroke-width="1.1"/><path d="M1 15.5 H16" stroke="#8ea8d8" stroke-width="1.1"/><path d="M10 3 L13 6" stroke="#333" stroke-width="1"/></svg>
<div class="t" style="left:85.5px;top:488.6px;font-size:13.3px;color:#222;font-weight:bold">Layout Sketch</div>
<div class="a" style="left:64px;top:518px;width:171px;height:7px;background:#b3b3b3"></div>
<svg style="left:64px;top:539px" width="17" height="17" viewBox="0 0 17 17"><path d="M2.5 13 L3.5 9.5 L11.5 1.5 L14.5 4.5 L6.5 12.5 Z" fill="#fff" stroke="#a8a8a8" stroke-width="1.1"/><path d="M1 15.5 H16" stroke="#8ea8d8" stroke-width="1.1"/><path d="M10 3 L13 6" stroke="#a8a8a8" stroke-width="1"/></svg>
<div class="t" style="left:86.3px;top:540.6px;font-size:13.3px;color:#b4b4b4;font-style:italic">Outer Plate Sk</div>
<svg style="left:64px;top:565px" width="17" height="16" viewBox="0 0 17 16"><path d="M1.5 3.5 Q1.5 1 4 1 H13 L15.5 3.5 V15 H4 L1.5 12.5 Z" fill="#fff" stroke="#a8a8a8" stroke-width="1.1"/><path d="M4 3.5 H15.5 M4 3.5 V15" fill="none" stroke="#a8a8a8" stroke-width="0.9"/><rect x="6.5" y="6" width="9" height="9" fill="#b0b0b0" stroke="#a8a8a8" stroke-width="1"/></svg>
<div class="t" style="left:86.3px;top:566.6px;font-size:13.3px;color:#b4b4b4;font-style:italic">Outer Plate</div>
<svg style="left:64px;top:591px" width="17" height="17" viewBox="0 0 17 17"><path d="M2.5 13 L3.5 9.5 L11.5 1.5 L14.5 4.5 L6.5 12.5 Z" fill="#fff" stroke="#a8a8a8" stroke-width="1.1"/><path d="M1 15.5 H16" stroke="#8ea8d8" stroke-width="1.1"/><path d="M10 3 L13 6" stroke="#a8a8a8" stroke-width="1"/></svg>
<div class="t" style="left:86.3px;top:592.6px;font-size:13.3px;color:#b4b4b4;font-style:italic">Inner Plate Sk</div>
<svg style="left:64px;top:617px" width="17" height="16" viewBox="0 0 17 16"><path d="M1.5 3.5 Q1.5 1 4 1 H13 L15.5 3.5 V15 H4 L1.5 12.5 Z" fill="#fff" stroke="#a8a8a8" stroke-width="1.1"/><path d="M4 3.5 H15.5 M4 3.5 V15" fill="none" stroke="#a8a8a8" stroke-width="0.9"/><rect x="6.5" y="6" width="9" height="9" fill="#b0b0b0" stroke="#a8a8a8" stroke-width="1"/></svg>
<div class="t" style="left:86.3px;top:618.6px;font-size:13.3px;color:#b4b4b4;font-style:italic">Inner Plate</div>
<svg style="left:64px;top:643px" width="17" height="17" viewBox="0 0 17 17"><path d="M2.5 13 L3.5 9.5 L11.5 1.5 L14.5 4.5 L6.5 12.5 Z" fill="#fff" stroke="#a8a8a8" stroke-width="1.1"/><path d="M1 15.5 H16" stroke="#8ea8d8" stroke-width="1.1"/><path d="M10 3 L13 6" stroke="#a8a8a8" stroke-width="1"/></svg>
<div class="t" style="left:86.3px;top:644.6px;font-size:13.3px;color:#b4b4b4;font-style:italic">Crush Plate</div>
<svg style="left:64px;top:669px" width="17" height="16" viewBox="0 0 17 16"><path d="M1.5 3.5 Q1.5 1 4 1 H13 L15.5 3.5 V15 H4 L1.5 12.5 Z" fill="#fff" stroke="#a8a8a8" stroke-width="1.1"/><path d="M4 3.5 H15.5 M4 3.5 V15" fill="none" stroke="#a8a8a8" stroke-width="0.9"/><rect x="6.5" y="6" width="9" height="9" fill="#b0b0b0" stroke="#a8a8a8" stroke-width="1"/></svg>
<div class="t" style="left:86.3px;top:670.6px;font-size:13.3px;color:#b4b4b4;font-style:italic">Crush Plate</div>
<div class="a" style="left:40px;top:692px;width:200px;height:16.5px;overflow:hidden"><svg style="left:5px;top:3px" width="17" height="16" viewBox="0 0 17 16"><rect x="1" y="6" width="15" height="9" rx="2" fill="#a0a0a0"/><circle cx="5" cy="10.5" r="2.3" fill="#fff" stroke="#a0a0a0"/><circle cx="11.5" cy="10.5" r="2.3" fill="#fff" stroke="#a0a0a0"/><path d="M3 1 V5 M6 1 V5 M10 1 V5 M13 1 V5" stroke="#a0a0a0" stroke-width="0.8"/></svg><div class="t" style="left:27px;top:4.8px;font-size:13px;color:#a8a8a8;font-style:italic">First Stage Shaft</div></div>
<svg style="left:197px;top:694px" width="7" height="18" viewBox="0 0 7 18"><circle cx="3.5" cy="1.5" r="0.9" fill="#222"/><circle cx="3.5" cy="4.5" r="0.9" fill="#222"/><circle cx="3.5" cy="9" r="2.6" fill="#222"/><circle cx="3.5" cy="13.5" r="0.9" fill="#222"/><circle cx="3.5" cy="16.5" r="0.9" fill="#222"/></svg>
<div class="a" style="left:40px;top:708.5px;width:200px;height:1px;background:#d0d0d0"></div>
<svg style="left:44px;top:717px" width="13" height="9" viewBox="0 0 13 9"><path d="M1.2 1.5 L6.5 7 L11.8 1.5" fill="none" stroke="#444" stroke-width="2.1"/></svg>
<div class="t" style="left:63px;top:715.6px;font-size:13.3px;color:#333;">Parts (2)</div>
<svg style="left:64px;top:740px" width="17" height="16" viewBox="0 0 17 16"><path d="M1.5 8 L4 5.5 H9 V3 L11.5 1 H15.5 V12.5 L13 15 H1.5 Z" fill="#fff" stroke="#a8a8a8" stroke-width="1.1"/><path d="M1.5 8 H9 V15 M9 8 L11.5 5.5 V1 M11.5 5.5 H15.5" fill="none" stroke="#a8a8a8" stroke-width="0.9"/></svg>
<div class="t" style="left:85.5px;top:741.6px;font-size:13.3px;color:#a8a8a8;">Origin Cube</div>
<svg style="left:64px;top:766px" width="17" height="16" viewBox="0 0 17 16"><path d="M1.5 8 L4 5.5 H9 V3 L11.5 1 H15.5 V12.5 L13 15 H1.5 Z" fill="#fff" stroke="#444" stroke-width="1.1"/><path d="M1.5 8 H9 V15 M9 8 L11.5 5.5 V1 M11.5 5.5 H15.5" fill="none" stroke="#444" stroke-width="0.9"/></svg>
<div class="t" style="left:85.5px;top:767.6px;font-size:13.3px;color:#333;">Tube 2"x1"x16"</div>
<div class="a" style="left:245px;top:538.5px;width:33px;height:33.5px;background:#fff;border:1px solid #a0a0a0;border-left:none"></div>
<svg style="left:251px;top:546px" width="20" height="20" viewBox="0 0 20 20"><path d="M1 1.5 L3.5 4 L6 1.5" fill="none" stroke="#333" stroke-width="1.2"/><path d="M3.5 6 V18.5" stroke="#8a8a8a" stroke-width="1.8"/><path d="M7 2.5 H19 M5.5 7.5 H19 M5.5 12.5 H19 M5.5 17.5 H19" stroke="#222" stroke-width="1.1"/></svg>
<!-- graphics -->
<svg class="a" style="left:0;top:0" width="1919" height="1079" viewBox="0 0 1919 1079">
<rect x="282.5" y="349.5" width="1601" height="720" fill="none" stroke="#a2d6f0" stroke-width="1"/>
<rect x="285.8" y="699.8" width="1594.5" height="199.4" fill="#bcc0c3" stroke="#2c2c2c" stroke-width="1.8"/>
<circle cx="335.5" cy="749.7" r="9.6" fill="#e2e5e8" stroke="#1e1e1e" stroke-width="1.5"/>
<circle cx="385.3" cy="749.7" r="9.6" fill="#e2e5e8" stroke="#1e1e1e" stroke-width="1.5"/>
<circle cx="435.2" cy="749.7" r="9.6" fill="#e2e5e8" stroke="#1e1e1e" stroke-width="1.5"/>
<circle cx="485.0" cy="749.7" r="9.6" fill="#e2e5e8" stroke="#1e1e1e" stroke-width="1.5"/>
<circle cx="534.8" cy="749.7" r="9.6" fill="#e2e5e8" stroke="#1e1e1e" stroke-width="1.5"/>
<circle cx="584.6" cy="749.7" r="9.6" fill="#e2e5e8" stroke="#1e1e1e" stroke-width="1.5"/>
<circle cx="634.5" cy="749.7" r="9.6" fill="#e2e5e8" stroke="#1e1e1e" stroke-width="1.5"/>
<circle cx="684.3" cy="749.7" r="9.6" fill="#e2e5e8" stroke="#1e1e1e" stroke-width="1.5"/>
<circle cx="734.1" cy="749.7" r="9.6" fill="#e2e5e8" stroke="#1e1e1e" stroke-width="1.5"/>
<circle cx="784.0" cy="749.7" r="9.6" fill="#e2e5e8" stroke="#1e1e1e" stroke-width="1.5"/>
<circle cx="833.8" cy="749.7" r="9.6" fill="#e2e5e8" stroke="#1e1e1e" stroke-width="1.5"/>
<circle cx="883.6" cy="749.7" r="9.6" fill="#e2e5e8" stroke="#1e1e1e" stroke-width="1.5"/>
<circle cx="933.5" cy="749.7" r="9.6" fill="#e2e5e8" stroke="#1e1e1e" stroke-width="1.5"/>
<circle cx="983.3" cy="749.7" r="9.6" fill="#e2e5e8" stroke="#1e1e1e" stroke-width="1.5"/>
<circle cx="1033.1" cy="749.7" r="9.6" fill="#e2e5e8" stroke="#1e1e1e" stroke-width="1.5"/>
<circle cx="1082.9" cy="749.7" r="9.6" fill="#e2e5e8" stroke="#1e1e1e" stroke-width="1.5"/>
<circle cx="1132.8" cy="749.7" r="9.6" fill="#e2e5e8" stroke="#1e1e1e" stroke-width="1.5"/>
<circle cx="1182.6" cy="749.7" r="9.6" fill="#e2e5e8" stroke="#1e1e1e" stroke-width="1.5"/>
<circle cx="1232.4" cy="749.7" r="9.6" fill="#e2e5e8" stroke="#1e1e1e" stroke-width="1.5"/>
<circle cx="1282.3" cy="749.7" r="9.6" fill="#e2e5e8" stroke="#1e1e1e" stroke-width="1.5"/>
<circle cx="1332.1" cy="749.7" r="9.6" fill="#e2e5e8" stroke="#1e1e1e" stroke-width="1.5"/>
<circle cx="1381.9" cy="749.7" r="9.6" fill="#e2e5e8" stroke="#1e1e1e" stroke-width="1.5"/>
<circle cx="1431.8" cy="749.7" r="9.6" fill="#e2e5e8" stroke="#1e1e1e" stroke-width="1.5"/>
<circle cx="1481.6" cy="749.7" r="9.6" fill="#e2e5e8" stroke="#1e1e1e" stroke-width="1.5"/>
<circle cx="1531.4" cy="749.7" r="9.6" fill="#e2e5e8" stroke="#1e1e1e" stroke-width="1.5"/>
<circle cx="1581.2" cy="749.7" r="9.6" fill="#e2e5e8" stroke="#1e1e1e" stroke-width="1.5"/>
<circle cx="1631.1" cy="749.7" r="9.6" fill="#e2e5e8" stroke="#1e1e1e" stroke-width="1.5"/>
<circle cx="1680.9" cy="749.7" r="9.6" fill="#e2e5e8" stroke="#1e1e1e" stroke-width="1.5"/>
<circle cx="1730.7" cy="749.7" r="9.6" fill="#e2e5e8" stroke="#1e1e1e" stroke-width="1.5"/>
<circle cx="1780.6" cy="749.7" r="9.6" fill="#e2e5e8" stroke="#1e1e1e" stroke-width="1.5"/>
<circle cx="1830.4" cy="749.7" r="9.6" fill="#e2e5e8" stroke="#1e1e1e" stroke-width="1.5"/>
<circle cx="335.5" cy="799.7" r="9.6" fill="#e2e5e8" stroke="#1e1e1e" stroke-width="1.5"/>
<circle cx="385.3" cy="799.7" r="9.6" fill="#e2e5e8" stroke="#1e1e1e" stroke-width="1.5"/>
<circle cx="435.2" cy="799.7" r="9.6" fill="#e2e5e8" stroke="#1e1e1e" stroke-width="1.5"/>
<circle cx="485.0" cy="799.7" r="9.6" fill="#e2e5e8" stroke="#1e1e1e" stroke-width="1.5"/>
<circle cx="534.8" cy="799.7" r="9.6" fill="#e2e5e8" stroke="#1e1e1e" stroke-width="1.5"/>
<circle cx="584.6" cy="799.7" r="9.6" fill="#e2e5e8" stroke="#1e1e1e" stroke-width="1.5"/>
<circle cx="634.5" cy="799.7" r="9.6" fill="#e2e5e8" stroke="#1e1e1e" stroke-width="1.5"/>
<circle cx="684.3" cy="799.7" r="9.6" fill="#e2e5e8" stroke="#1e1e1e" stroke-width="1.5"/>
<circle cx="734.1" cy="799.7" r="9.6" fill="#e2e5e8" stroke="#1e1e1e" stroke-width="1.5"/>
<circle cx="784.0" cy="799.7" r="9.6" fill="#e2e5e8" stroke="#1e1e1e" stroke-width="1.5"/>
<circle cx="833.8" cy="799.7" r="9.6" fill="#e2e5e8" stroke="#1e1e1e" stroke-width="1.5"/>
<circle cx="883.6" cy="799.7" r="9.6" fill="#e2e5e8" stroke="#1e1e1e" stroke-width="1.5"/>
<circle cx="933.5" cy="799.7" r="9.6" fill="#e2e5e8" stroke="#1e1e1e" stroke-width="1.5"/>
<circle cx="983.3" cy="799.7" r="9.6" fill="#e2e5e8" stroke="#1e1e1e" stroke-width="1.5"/>
<circle cx="1033.1" cy="799.7" r="9.6" fill="#e2e5e8" stroke="#1e1e1e" stroke-width="1.5"/>
<circle cx="1082.9" cy="799.7" r="9.6" fill="#e2e5e8" stroke="#1e1e1e" stroke-width="1.5"/>
<circle cx="1132.8" cy="799.7" r="9.6" fill="#e2e5e8" stroke="#1e1e1e" stroke-width="1.5"/>
<circle cx="1182.6" cy="799.7" r="9.6" fill="#e2e5e8" stroke="#1e1e1e" stroke-width="1.5"/>
<circle cx="1232.4" cy="799.7" r="9.6" fill="#e2e5e8" stroke="#1e1e1e" stroke-width="1.5"/>
<circle cx="1282.3" cy="799.7" r="9.6" fill="#e2e5e8" stroke="#1e1e1e" stroke-width="1.5"/>
<circle cx="1332.1" cy="799.7" r="9.6" fill="#e2e5e8" stroke="#1e1e1e" stroke-width="1.5"/>
<circle cx="1381.9" cy="799.7" r="9.6" fill="#e2e5e8" stroke="#1e1e1e" stroke-width="1.5"/>
<circle cx="1431.8" cy="799.7" r="9.6" fill="#e2e5e8" stroke="#1e1e1e" stroke-width="1.5"/>
<circle cx="1481.6" cy="799.7" r="9.6" fill="#e2e5e8" stroke="#1e1e1e" stroke-width="1.5"/>
<circle cx="1531.4" cy="799.7" r="9.6" fill="#e2e5e8" stroke="#1e1e1e" stroke-width="1.5"/>
<circle cx="1581.2" cy="799.7" r="9.6" fill="#e2e5e8" stroke="#1e1e1e" stroke-width="1.5"/>
<circle cx="1631.1" cy="799.7" r="9.6" fill="#e2e5e8" stroke="#1e1e1e" stroke-width="1.5"/>
<circle cx="1680.9" cy="799.7" r="9.6" fill="#e2e5e8" stroke="#1e1e1e" stroke-width="1.5"/>
<circle cx="1730.7" cy="799.7" r="9.6" fill="#e2e5e8" stroke="#1e1e1e" stroke-width="1.5"/>
<circle cx="1780.6" cy="799.7" r="9.6" fill="#e2e5e8" stroke="#1e1e1e" stroke-width="1.5"/>
<circle cx="1830.4" cy="799.7" r="9.6" fill="#e2e5e8" stroke="#1e1e1e" stroke-width="1.5"/>
<circle cx="335.5" cy="849.7" r="9.6" fill="#e2e5e8" stroke="#1e1e1e" stroke-width="1.5"/>
<circle cx="385.3" cy="849.7" r="9.6" fill="#e2e5e8" stroke="#1e1e1e" stroke-width="1.5"/>
<circle cx="435.2" cy="849.7" r="9.6" fill="#e2e5e8" stroke="#1e1e1e" stroke-width="1.5"/>
<circle cx="485.0" cy="849.7" r="9.6" fill="#e2e5e8" stroke="#1e1e1e" stroke-width="1.5"/>
<circle cx="534.8" cy="849.7" r="9.6" fill="#e2e5e8" stroke="#1e1e1e" stroke-width="1.5"/>
<circle cx="584.6" cy="849.7" r="9.6" fill="#e2e5e8" stroke="#1e1e1e" stroke-width="1.5"/>
<circle cx="634.5" cy="849.7" r="9.6" fill="#e2e5e8" stroke="#1e1e1e" stroke-width="1.5"/>
<circle cx="684.3" cy="849.7" r="9.6" fill="#e2e5e8" stroke="#1e1e1e" stroke-width="1.5"/>
<circle cx="734.1" cy="849.7" r="9.6" fill="#e2e5e8" stroke="#1e1e1e" stroke-width="1.5"/>
<circle cx="784.0" cy="849.7" r="9.6" fill="#e2e5e8" stroke="#1e1e1e" stroke-width="1.5"/>
<circle cx="833.8" cy="849.7" r="9.6" fill="#e2e5e8" stroke="#1e1e1e" stroke-width="1.5"/>
<circle cx="883.6" cy="849.7" r="9.6" fill="#e2e5e8" stroke="#1e1e1e" stroke-width="1.5"/>
<circle cx="933.5" cy="849.7" r="9.6" fill="#e2e5e8" stroke="#1e1e1e" stroke-width="1.5"/>
<circle cx="983.3" cy="849.7" r="9.6" fill="#e2e5e8" stroke="#1e1e1e" stroke-width="1.5"/>
<circle cx="1033.1" cy="849.7" r="9.6" fill="#e2e5e8" stroke="#1e1e1e" stroke-width="1.5"/>
<circle cx="1082.9" cy="849.7" r="9.6" fill="#e2e5e8" stroke="#1e1e1e" stroke-width="1.5"/>
<circle cx="1132.8" cy="849.7" r="9.6" fill="#e2e5e8" stroke="#1e1e1e" stroke-width="1.5"/>
<circle cx="1182.6" cy="849.7" r="9.6" fill="#e2e5e8" stroke="#1e1e1e" stroke-width="1.5"/>
<circle cx="1232.4" cy="849.7" r="9.6" fill="#e2e5e8" stroke="#1e1e1e" stroke-width="1.5"/>
<circle cx="1282.3" cy="849.7" r="9.6" fill="#e2e5e8" stroke="#1e1e1e" stroke-width="1.5"/>
<circle cx="1332.1" cy="849.7" r="9.6" fill="#e2e5e8" stroke="#1e1e1e" stroke-width="1.5"/>
<circle cx="1381.9" cy="849.7" r="9.6" fill="#e2e5e8" stroke="#1e1e1e" stroke-width="1.5"/>
<circle cx="1431.8" cy="849.7" r="9.6" fill="#e2e5e8" stroke="#1e1e1e" stroke-width="1.5"/>
<circle cx="1481.6" cy="849.7" r="9.6" fill="#e2e5e8" stroke="#1e1e1e" stroke-width="1.5"/>
<circle cx="1531.4" cy="849.7" r="9.6" fill="#e2e5e8" stroke="#1e1e1e" stroke-width="1.5"/>
<circle cx="1581.2" cy="849.7" r="9.6" fill="#e2e5e8" stroke="#1e1e1e" stroke-width="1.5"/>
<circle cx="1631.1" cy="849.7" r="9.6" fill="#e2e5e8" stroke="#1e1e1e" stroke-width="1.5"/>
<circle cx="1680.9" cy="849.7" r="9.6" fill="#e2e5e8" stroke="#1e1e1e" stroke-width="1.5"/>
<circle cx="1730.7" cy="849.7" r="9.6" fill="#e2e5e8" stroke="#1e1e1e" stroke-width="1.5"/>
<circle cx="1780.6" cy="849.7" r="9.6" fill="#e2e5e8" stroke="#1e1e1e" stroke-width="1.5"/>
<circle cx="1830.4" cy="849.7" r="9.6" fill="#e2e5e8" stroke="#1e1e1e" stroke-width="1.5"/>
<path d="M325.5 699.8 H345.5 M325.5 899.2 H345.5" stroke="#181818" stroke-width="1.9"/>
<path d="M375.3 699.8 H395.3 M375.3 899.2 H395.3" stroke="#181818" stroke-width="1.9"/>
<path d="M425.2 699.8 H445.2 M425.2 899.2 H445.2" stroke="#181818" stroke-width="1.9"/>
<path d="M475.0 699.8 H495.0 M475.0 899.2 H495.0" stroke="#181818" stroke-width="1.9"/>
<path d="M524.8 699.8 H544.8 M524.8 899.2 H544.8" stroke="#181818" stroke-width="1.9"/>
<path d="M574.6 699.8 H594.6 M574.6 899.2 H594.6" stroke="#181818" stroke-width="1.9"/>
<path d="M624.5 699.8 H644.5 M624.5 899.2 H644.5" stroke="#181818" stroke-width="1.9"/>
<path d="M674.3 699.8 H694.3 M674.3 899.2 H694.3" stroke="#181818" stroke-width="1.9"/>
<path d="M724.1 699.8 H744.1 M724.1 899.2 H744.1" stroke="#181818" stroke-width="1.9"/>
<path d="M774.0 699.8 H794.0 M774.0 899.2 H794.0" stroke="#181818" stroke-width="1.9"/>
<path d="M823.8 699.8 H843.8 M823.8 899.2 H843.8" stroke="#181818" stroke-width="1.9"/>
<path d="M873.6 699.8 H893.6 M873.6 899.2 H893.6" stroke="#181818" stroke-width="1.9"/>
<path d="M923.5 699.8 H943.5 M923.5 899.2 H943.5" stroke="#181818" stroke-width="1.9"/>
<path d="M973.3 699.8 H993.3 M973.3 899.2 H993.3" stroke="#181818" stroke-width="1.9"/>
<path d="M1023.1 699.8 H1043.1 M1023.1 899.2 H1043.1" stroke="#181818" stroke-width="1.9"/>
<path d="M1072.9 699.8 H1092.9 M1072.9 899.2 H1092.9" stroke="#181818" stroke-width="1.9"/>
<path d="M1122.8 699.8 H1142.8 M1122.8 899.2 H1142.8" stroke="#181818" stroke-width="1.9"/>
<path d="M1172.6 699.8 H1192.6 M1172.6 899.2 H1192.6" stroke="#181818" stroke-width="1.9"/>
<path d="M1222.4 699.8 H1242.4 M1222.4 899.2 H1242.4" stroke="#181818" stroke-width="1.9"/>
<path d="M1272.3 699.8 H1292.3 M1272.3 899.2 H1292.3" stroke="#181818" stroke-width="1.9"/>
<path d="M1322.1 699.8 H1342.1 M1322.1 899.2 H1342.1" stroke="#181818" stroke-width="1.9"/>
<path d="M1371.9 699.8 H1391.9 M1371.9 899.2 H1391.9" stroke="#181818" stroke-width="1.9"/>
<path d="M1421.8 699.8 H1441.8 M1421.8 899.2 H1441.8" stroke="#181818" stroke-width="1.9"/>
<path d="M1471.6 699.8 H1491.6 M1471.6 899.2 H1491.6" stroke="#181818" stroke-width="1.9"/>
<path d="M1521.4 699.8 H1541.4 M1521.4 899.2 H1541.4" stroke="#181818" stroke-width="1.9"/>
<path d="M1571.2 699.8 H1591.2 M1571.2 899.2 H1591.2" stroke="#181818" stroke-width="1.9"/>
<path d="M1621.1 699.8 H1641.1 M1621.1 899.2 H1641.1" stroke="#181818" stroke-width="1.9"/>
<path d="M1670.9 699.8 H1690.9 M1670.9 899.2 H1690.9" stroke="#181818" stroke-width="1.9"/>
<path d="M1720.7 699.8 H1740.7 M1720.7 899.2 H1740.7" stroke="#181818" stroke-width="1.9"/>
<path d="M1770.6 699.8 H1790.6 M1770.6 899.2 H1790.6" stroke="#181818" stroke-width="1.9"/>
<path d="M1820.4 699.8 H1840.4 M1820.4 899.2 H1840.4" stroke="#181818" stroke-width="1.9"/>
<circle cx="1083" cy="799.7" r="4.6" fill="none" stroke="#111" stroke-width="2"/><circle cx="1083" cy="799.7" r="1.6" fill="#111"/>
<g fill="none" stroke="#0d0d0d" stroke-width="2.1" stroke-dasharray="30 6.1 4 6.1">
<circle cx="1083" cy="515.5" r="160" stroke-dashoffset="4.5"/>
<circle cx="1083" cy="515.5" r="64.2" stroke-dashoffset="6.8"/>
<circle cx="1282" cy="531" r="159.5" stroke-dashoffset="4.7"/>
<circle cx="1281.7" cy="530.8" r="40" stroke-dashoffset="19.7"/>
<circle cx="1358" cy="351.7" r="118" stroke-dashoffset="29.3"/>
<circle cx="1358" cy="351.7" r="35.3" stroke-dashoffset="15.2"/>
<circle cx="1471.4" cy="572.4" r="118" stroke-dashoffset="37.9"/>
<circle cx="1471.4" cy="572.4" r="35" stroke-dashoffset="4.9"/>
</g>
<g fill="#0d0d0d">
<circle cx="1083" cy="515.5" r="2.8"/>
<circle cx="1281.7" cy="530.8" r="2.8"/>
<circle cx="1358" cy="352" r="2.8"/>
<circle cx="1471.4" cy="572.5" r="2.8"/>
</g>
<!-- belt -->
<polygon points="1420,452 1613.3,353.3 1619,363.3 1426.3,463.7" fill="none" stroke="#111" stroke-width="1.1"/>
<!-- leaders -->
<g stroke="#111" stroke-width="1.2" fill="none">
<line x1="1003" y1="366" x2="1048" y2="452"/>
<line x1="1160.4" y1="308.6" x2="1141" y2="358"/>
<line x1="1483" y1="240.5" x2="1452" y2="268"/>
<line x1="1588" y1="303" x2="1616" y2="358"/>
<line x1="1278.5" y1="599" x2="1280" y2="586"/>
<line x1="986" y1="675" x2="1083" y2="675"/>
<line x1="986" y1="675" x2="986" y2="700"/>
<line x1="1211.7" y1="690" x2="1282" y2="690"/>
<line x1="1211.7" y1="690" x2="1211.7" y2="711"/>
<line x1="1394.4" y1="690" x2="1471" y2="690"/>
<line x1="1394.4" y1="690" x2="1394.4" y2="712"/>
</g>
<g fill="#0d0d0d">
<!-- arrowheads -->
<polygon points="1052,458.5 1039,444 1049,439"/>
<polygon points="1138,365 1135.5,346 1146.5,350"/>
<polygon points="1445,274 1454,259 1461,267"/>
<polygon points="1280.2,570.4 1275,587 1284,587"/>
<polygon points="1506.4,573.3 1521,568 1521,578"/>
<polygon points="986,676 983,688 989,688"/>
<polygon points="986,699 983,688 989,688"/>
<polygon points="1211.7,690.5 1210,698 1213.4,698"/>
<polygon points="1394.4,690.5 1392.7,698 1396.1,698"/>
<polygon points="1619,363 1613,352 1617,351"/>
</g>

</svg>
<div class="t" style="left:290.5px;top:357.5px;font-size:19.3px;color:#a4d5ef">Layout Sketch</div>
<!-- dimension labels -->
<div class="a" style="left:927.5px;top:313.3px;width:136.3px;height:22.5px;background:#dcebf2;border-radius:2px"></div>
<div class="t" style="left:932px;top:316px;font-size:13.5px;color:#1d2a30">#SprocketPD_25(16)</div>
<div class="t dimf" style="left:948px;top:343px">ƒx</div>
<div class="t dimv" style="left:968.7px;top:345px">Ø1.281</div>

<div class="a exbox" style="left:1130.8px;top:256px;width:68.6px;height:22.6px"></div>
<div class="t dime" style="left:1135.6px;top:258px">(64/20) in</div>
<div class="t dimf" style="left:1128px;top:286px">ƒ</div>
<div class="t dimv" style="left:1147.8px;top:286.5px">Ø3.2</div>

<div class="t dimv" style="left:1470.8px;top:218.5px">Ø2.362</div>

<div class="a exbox" style="left:1555px;top:250px;width:51.3px;height:23px"></div>
<div class="t dime" style="left:1559.7px;top:252.5px">(1/8) in</div>
<div class="t dimf" style="left:1541px;top:282px">ƒ</div>
<div class="t dimv" style="left:1559px;top:282px">0.125</div>

<div class="a exbox" style="left:1242.5px;top:599.2px;width:67.9px;height:22.5px"></div>
<div class="t dime" style="left:1248px;top:601.5px">(16/20) in</div>
<div class="t dimf" style="left:1239.6px;top:629px">ƒ</div>
<div class="t dimv" style="left:1258.3px;top:630.2px">Ø0.8</div>

<div class="a exbox" style="left:1519px;top:537.3px;width:67.5px;height:22.4px"></div>
<div class="t dime" style="left:1524.2px;top:539.5px">(14/20) in</div>
<div class="t dimf" style="left:1517px;top:567.5px">ƒ</div>
<div class="t dimv" style="left:1535.2px;top:567.8px">Ø0.7</div>

<div class="t dimv" style="left:968.6px;top:678.8px">0.25</div>
<div class="t dimv" style="left:1200.3px;top:718.3px">0.1</div>
<div class="t dimv" style="left:1383px;top:719.6px">0.1</div>

<div class="a" style="left:258px;top:79px;width:220px;height:220px;background:#fff;box-shadow:0 2px 6px rgba(0,0,0,0.22);border-radius:1px"></div>
<div class="t" style="left:264.4px;top:86.5px;font-size:13px;font-weight:bold;color:#2a2a2a;letter-spacing:-0.45px">Layout Sketch</div>
<div class="a" style="left:422px;top:79px;width:27.8px;height:27.6px;background:#0f9a1c"></div>
<svg style="left:426px;top:84px" width="20" height="17" viewBox="0 0 20 17"><path d="M3 8.5 L8 13.5 L17 3.5" fill="none" stroke="#fff" stroke-width="3"/></svg>
<svg style="left:457.5px;top:88px" width="13" height="12" viewBox="0 0 13 12"><path d="M1.5 1 L11.5 11 M11.5 1 L1.5 11" stroke="#d22f2f" stroke-width="2.6"/></svg>
<div class="a" style="left:258px;top:107px;width:220px;height:1px;background:#e2e2e2"></div>
<div class="a" style="left:261.4px;top:113.1px;width:187.3px;height:43.2px;border:1px solid #dedede;background:#fff"></div>
<div class="t" style="left:267.2px;top:119.5px;font-size:9.5px;font-weight:bold;color:#555">Sketch plane</div>
<div class="t" style="left:268.3px;top:139px;font-size:13px;color:#3a3a3a">Face of Tube Extrude</div>
<svg style="left:428.5px;top:141px" width="9" height="9" viewBox="0 0 9 9"><path d="M0.8 0.8 L8.2 8.2 M8.2 0.8 L0.8 8.2" stroke="#444" stroke-width="1.2"/></svg>
<svg style="left:452.5px;top:117px" width="19" height="18" viewBox="0 0 19 18"><circle cx="9.5" cy="9" r="8.3" fill="none" stroke="#3a3a3a" stroke-width="1.1"/><circle cx="9.5" cy="9" r="6.7" fill="none" stroke="#3a3a3a" stroke-width="1"/><path d="M9 3.5 V9.5 H15" fill="none" stroke="#3a3a3a" stroke-width="1.5"/></svg>
<!-- checkboxes -->
<div class="a" style="left:262px;top:170.5px;width:12px;height:12px;border:1.2px solid #707070;border-radius:2px;background:#fff"></div>
<div class="t" style="left:278.6px;top:170px;font-size:13.3px;color:#444">Disable imprinting</div>
<div class="a" style="left:262px;top:197.8px;width:12px;height:12px;border:1.2px solid #707070;border-radius:2px;background:#fff"></div>
<div class="t" style="left:278.6px;top:197.3px;font-size:13.3px;color:#444">Show constraints</div>
<div class="a" style="left:262px;top:225.2px;width:12px;height:12px;border-radius:2px;background:#1f5cbf"></div>
<svg style="left:263px;top:227px" width="10" height="9" viewBox="0 0 10 9"><path d="M1.5 4.5 L4 7 L8.5 2" fill="none" stroke="#fff" stroke-width="1.8"/></svg>
<div class="t" style="left:278.6px;top:224.6px;font-size:13.3px;color:#444">Show expressions</div>
<div class="a" style="left:262px;top:252.1px;width:12px;height:12px;border-radius:2px;background:#1f5cbf"></div>
<svg style="left:263px;top:254px" width="10" height="9" viewBox="0 0 10 9"><path d="M1.5 4.5 L4 7 L8.5 2" fill="none" stroke="#fff" stroke-width="1.8"/></svg>
<div class="t" style="left:278.6px;top:251.5px;font-size:13.3px;color:#444">Show errors</div>
<div class="a" style="left:430.6px;top:274.3px;width:20.7px;height:21.2px;border:1px solid #bbb;border-radius:2px;background:#fff"></div>
<svg style="left:432px;top:276px" width="18" height="18" viewBox="0 0 18 18"><circle cx="9" cy="9" r="7" fill="none" stroke="#2a2a2a" stroke-width="1.3"/><path d="M5 12 L6 9 L11 3.5 L13 5.5 L8 11 Z" fill="#fff" stroke="#2a2a2a" stroke-width="1.1"/><path d="M3 13.5 H15" stroke="#3c6fc4" stroke-width="1.1"/><path d="M13.5 13.5 L16.5 16.5" stroke="#2a2a2a" stroke-width="1.6"/></svg>
<svg style="left:461px;top:282.4px" width="12" height="12" viewBox="0 0 12 12"><circle cx="6" cy="6" r="6" fill="#a9a9a9"/><text x="6" y="10" text-anchor="middle" font-family="Liberation Sans" font-weight="bold" font-size="10" fill="#fff">?</text></svg>

<svg style="left:1740px;top:80px" width="179" height="170" viewBox="1740 80 179 170">
<g fill="#9b9b9b">
<polygon points="1822.5,100.8 1830,91.3 1837.5,100.8"/>
<polygon points="1755,165.4 1765,158.3 1765,172.5"/>
<polygon points="1905,165.4 1895,158.3 1895,172.5"/>
<polygon points="1822.5,231 1837.5,231 1830,240.8"/>
</g>
<path d="M1809 103 Q1792 108 1783 118" fill="none" stroke="#9b9b9b" stroke-width="4.2"/>
<polygon points="1776.5,124.5 1778.5,111 1789,120" fill="#9b9b9b"/>
<path d="M1851 103 Q1868 108 1877 118" fill="none" stroke="#9b9b9b" stroke-width="4.2"/>
<polygon points="1883.5,124.5 1881.5,111 1871,120" fill="#9b9b9b"/>
<!-- cube face frame -->
<path d="M1812 137.5 H1848 V140 L1852 143.5 H1858.3 V188 H1852 L1848 191.5 V194.2 H1812 V191.5 L1808 188 H1801.7 V143.5 H1808 L1812 140 Z" fill="#e6e7e9"/>
<rect x="1807.5" y="143.3" width="44.5" height="45" rx="7" fill="#fdfdfd"/>
<path d="M1799.5 137.5 V196.2 H1858.3" fill="none" stroke="#3434c8" stroke-width="1.3"/>
<path d="M1799.5 196.2 H1858.3" stroke="#2bb52b" stroke-width="1.3"/>
<text x="1799.4" y="131.7" text-anchor="middle" font-family="Liberation Sans" font-size="12.5" fill="#5050d0">Z</text>
<text x="1868.4" y="200" text-anchor="middle" font-family="Liberation Sans" font-size="12.5" fill="#2aa52a">Y</text>
<text x="1829.8" y="169.2" text-anchor="middle" font-family="Liberation Sans" font-size="12.3" fill="#111">Right</text>
<!-- small cube -->
<path d="M1875 222.5 L1884.2 226.5 V236.5 L1875 240.8 L1865.8 236.5 V226.5 Z" fill="#cfcfcf" stroke="#333" stroke-width="1"/>
<path d="M1865.8 226.5 L1875 230.5 L1884.2 226.5 L1875 222.5 Z" fill="#fff" stroke="#333" stroke-width="0.8"/>
<path d="M1875 230.5 V240.8" stroke="#333" stroke-width="0.8"/>
<path d="M1875 230.5 L1884.2 226.5 V236.5 L1875 240.8 Z" fill="#e8e8e8"/>
<polygon points="1892,229.7 1900,229.7 1896,233.7" fill="#222"/>
</svg>
<!-- right icon panel -->
<div class="a" style="left:1889px;top:400.7px;width:32px;height:131.5px;background:#fff;border:1px solid #d3d3d3;border-right:none"></div>
<div class="a" style="left:1889px;top:432.8px;width:30px;height:1px;background:#d3d3d3"></div>
<div class="a" style="left:1889px;top:465.8px;width:30px;height:1px;background:#d3d3d3"></div>
<div class="a" style="left:1889px;top:498.6px;width:30px;height:1px;background:#d3d3d3"></div>
<div class="a" style="left:1889px;top:544.4px;width:32px;height:163.6px;background:#fff;border:1px solid #d3d3d3;border-right:none"></div>
<div class="a" style="left:1889px;top:576.5px;width:30px;height:1px;background:#d3d3d3"></div>
<div class="a" style="left:1889px;top:609.6px;width:30px;height:1px;background:#d3d3d3"></div>
<div class="a" style="left:1889px;top:642.3px;width:30px;height:1px;background:#d3d3d3"></div>
<div class="a" style="left:1889px;top:676px;width:30px;height:1px;background:#d3d3d3"></div>
<svg style="left:1894px;top:406px" width="22" height="20" viewBox="0 0 22 20">
<path d="M4 14 L10 2 L14.5 4 L10 14 Z" fill="#8a8a8a"/><path d="M7 14 L15 5 L18.5 8 L12 14 Z" fill="#a8a8a8"/>
<rect x="2.5" y="13" width="17.5" height="5.5" fill="#fff" stroke="#666" stroke-width="1"/><rect x="13" y="13.5" width="6.5" height="4.5" fill="#ccc"/>
<circle cx="5.5" cy="15.8" r="1.3" fill="none" stroke="#444" stroke-width="0.9"/>
</svg>
<svg style="left:1894px;top:439px" width="22" height="22" viewBox="0 0 22 22">
<rect x="1.5" y="2" width="9" height="7" fill="#2b62c6"/><path d="M1.5 4.3 H10.5 M1.5 6.6 H10.5 M4.5 2 V9 M7.5 2 V9" stroke="#fff" stroke-width="0.8"/>
<path d="M13 6 L20 9.2 V16.5 L13 20 L6 16.5 V9.2 Z M6 9.2 L13 12.5 L20 9.2 M13 12.5 V20" fill="#fff" stroke="#2a2a2a" stroke-width="1.2"/>
<rect x="1.5" y="2" width="9" height="7" fill="#2b62c6" opacity="0.9"/><path d="M1.5 4.3 H10.5 M1.5 6.6 H10.5 M4.5 2 V9 M7.5 2 V9" stroke="#fff" stroke-width="0.8"/>
</svg>
<svg style="left:1894px;top:472px" width="22" height="22" viewBox="0 0 22 22">
<path d="M11 8 L17 10.8 V16.5 L11 19.3 L5 16.5 V10.8 Z M5 10.8 L11 13.6 L17 10.8 M11 13.6 V19.3" fill="#e8e8e8" stroke="#2a2a2a" stroke-width="1.1"/>
<rect x="2.5" y="2" width="8.5" height="7.5" fill="#2a2a2a"/><path d="M2.5 4.5 H11 M2.5 7 H11 M5.3 2 V9.5 M8.1 2 V9.5" stroke="#fff" stroke-width="0.7"/>
<path d="M4 10 Q2 10 2.5 14 L1.3 15 L2.5 16 Q2 20 4 20 M18 10 Q20 10 19.5 14 L20.7 15 L19.5 16 Q20 20 18 20" fill="none" stroke="#2a2a2a" stroke-width="1.1"/>
</svg>
<svg style="left:1894px;top:505px" width="22" height="22" viewBox="0 0 22 22">
<rect x="2.5" y="1.5" width="9" height="8" fill="#2a2a2a"/><path d="M2.5 4.2 H11.5 M2.5 6.9 H11.5 M5.5 1.5 V9.5 M8.5 1.5 V9.5" stroke="#fff" stroke-width="0.7"/>
<path d="M3.5 10 Q1 14.5 3.5 20.5 M18.5 10 Q21 14.5 18.5 20.5" fill="none" stroke="#2a2a2a" stroke-width="1.6"/>
<path d="M6 12 Q9 10.5 10 14 Q11 19 14.5 18 M7 19 L15 11.5" fill="none" stroke="#2a2a2a" stroke-width="1.9"/>
</svg>
<div class="a" style="left:1892px;top:548px;width:26px;height:25px;background:#e4e4e4;border-radius:3px"></div>
<svg style="left:1895px;top:551px" width="20" height="19" viewBox="0 0 20 19">
<path d="M10 7 Q6 0 1 2 Q2 9 8 10 Q3 12 5 17 Q9 16 10 11 Q11 16 15 17 Q17 12 12 10 Q18 9 19 2 Q14 0 10 7 Z" fill="#111"/>
</svg>
<div class="a" style="left:1892.5px;top:581px;width:24px;height:24px;background:#1a5bbf;border:2px solid #0d2f6e"></div>
<div class="t" style="left:1894.5px;top:586.5px;font-size:12px;font-weight:bold;color:#fff;font-family:'Liberation Serif',serif;letter-spacing:-1px">MK</div>
<div class="a" style="left:1892px;top:613px;width:26px;height:26px;background:#e4e4e4;border-radius:3px"></div>
<svg style="left:1893px;top:615px" width="24" height="22" viewBox="0 0 24 22">
<rect x="2" y="7" width="20" height="12" rx="3" fill="#222" transform="rotate(-6 12 13)"/>
<circle cx="9" cy="13" r="3" fill="#fff" stroke="#4a7ad0" stroke-width="1.2"/><circle cx="15.5" cy="12.5" r="3" fill="#fff" stroke="#4a7ad0" stroke-width="1.2"/>
<path d="M5 2 H8 M10 2 H13 M15 2 H18 M6 4.5 H17" stroke="#4a7ad0" stroke-width="1"/>
</svg>
<div class="a" style="left:1892px;top:647px;width:26px;height:25px;background:#4caf50;border-radius:2px"></div>
<svg style="left:1895px;top:651px" width="20" height="17" viewBox="0 0 20 17"><path d="M1.5 1.5 Q6 0 9.3 2 V15.5 Q6 14 1.5 15 Z M18.5 1.5 Q14 0 10.7 2 V15.5 Q14 14 18.5 15 Z" fill="#fff"/></svg>
<div class="a" style="left:1892px;top:680px;width:26px;height:25px;background:#1a4fb0;border:2px solid #0c2a66;border-radius:2px"></div>
<svg style="left:1895px;top:684px" width="20" height="17" viewBox="0 0 20 17"><path d="M1.5 1.5 Q6 0 9.3 2 V15.5 Q6 14 1.5 15 Z M18.5 1.5 Q14 0 10.7 2 V15.5 Q14 14 18.5 15 Z" fill="#fff"/></svg>
<!-- bottom right measure icons -->
<div class="a" style="left:1812px;top:1020px;width:107px;height:30px;background:#fff"></div>
<svg style="left:1821px;top:1029px" width="18" height="15" viewBox="0 0 18 15">
<ellipse cx="11" cy="4.5" rx="5.5" ry="3.5" fill="#fff" stroke="#333" stroke-width="1.2"/><ellipse cx="11" cy="4" rx="2.5" ry="1.3" fill="none" stroke="#333" stroke-width="1"/>
<path d="M16.5 4.5 V10.5 Q16.5 12.5 14 13 H1 V8.5 H11 M5.5 4.5 V8.5" fill="#fff" stroke="#333" stroke-width="1.2"/><path d="M3.5 11 V12.5 M6 11 V12.5 M8.5 11 V12.5 M11 11 V12.5 M13.5 11 V12.5" stroke="#777" stroke-width="0.8"/>
</svg>
<svg style="left:1854.5px;top:1029px" width="21" height="15" viewBox="0 0 21 15">
<path d="M1 14 A9.5 9.5 0 0 1 20 14 Z" fill="#fff" stroke="#333" stroke-width="1.3"/><path d="M5 13 A5.5 5.5 0 0 1 16 13" fill="none" stroke="#333" stroke-width="1.3"/><path d="M3.5 12 A7 7 0 0 1 17.5 12" fill="none" stroke="#999" stroke-width="0.8" stroke-dasharray="0.8 1"/>
</svg>
<svg style="left:1892.5px;top:1028px" width="15" height="16" viewBox="0 0 15 16">
<path d="M7.5 1 V12.5 M1.5 1.5 H13.5" stroke="#555" stroke-width="1.2"/><path d="M2 1.5 L0.8 9 M2 1.5 L3.2 9 M13 1.5 L11.8 9 M13 1.5 L14.2 9" stroke="#333" stroke-width="0.9"/>
<path d="M0.5 9.3 H4 M11 9.3 H14.5" stroke="#222" stroke-width="1.6"/><path d="M0.5 14.5 H14.5" stroke="#222" stroke-width="1.8"/>
</svg>

<!-- bottom bar -->
<div class="a" style="left:40px;top:1050px;width:1879px;height:29px;background:#d8d8d8"></div>
<div class="a" style="left:40px;top:1050px;width:33.5px;height:29px;background:#d4d4d4"></div>
<svg style="left:48.5px;top:1057px" width="16" height="15" viewBox="0 0 16 15"><path d="M0.5 7.5 H15.5 M8 0.5 V14.5" stroke="#555" stroke-width="2.6"/></svg>
<svg style="left:73.5px;top:1050px" width="180" height="29" viewBox="0 0 180 29">
<path d="M0 0.5 H35 L42 14.5 L35 28.5 H0 Z" fill="#e9e9e9"/>
<path d="M35 0.5 H164.5 L170.5 14.5 L164.5 28.5 H35 L42 14.5 Z" fill="#fdfdfd"/>
</svg>
<svg style="left:82.5px;top:1053px" width="19" height="19" viewBox="0 0 19 19"><path d="M9.5 1 L18.5 9 V18 H12 V12.5 H7 V18 H0.5 V9 Z" fill="#5a5a5a"/><rect x="13.5" y="1.5" width="3" height="5" fill="#5a5a5a"/></svg>
<div class="a" style="left:109px;top:1050px;width:135px;height:29px;overflow:hidden">
<div class="t" style="left:20.5px;top:5.5px;font-size:13.8px;color:#4a4a4a">Exercise 5 - Flip</div>
<div class="a" style="left:116px;top:0;width:30px;height:29px;background:linear-gradient(90deg,rgba(253,253,253,0),#fdfdfd 30%)"></div>
</div>
<svg style="left:225px;top:1050px" width="20" height="29" viewBox="0 0 20 29"><path d="M0 0.5 H13 L19 14.5 L13 28.5 H0 Z" fill="#fdfdfd"/></svg>
<div class="a" style="left:246.9px;top:1050px;width:200.4px;height:29px;background:#e7e7e7;border-radius:4px 4px 0 0"></div>
<svg style="left:259.5px;top:1055px" width="15" height="15" viewBox="0 0 15 15"><circle cx="7.5" cy="7.5" r="7" fill="#5b8fd4"/><circle cx="7.5" cy="3.8" r="1.6" fill="#fff"/><rect x="6" y="6.5" width="3" height="6" fill="#fff"/></svg>
<svg style="left:277.5px;top:1053px" width="19" height="19" viewBox="0 0 19 19"><path d="M1 4 L4 1 H18 V15 L15 18 H1 Z" fill="#fff" stroke="#333" stroke-width="1.2"/><path d="M1 4 H15 V18 M15 4 L18 1" fill="none" stroke="#333" stroke-width="1"/><path d="M3.5 6.5 H13 V16 H3.5 Z" fill="#8a8a8a"/><path d="M3.5 6.5 L6 4 H15" fill="none" stroke="#666" stroke-width="1"/></svg>
<div class="t" style="left:300px;top:1057px;font-size:14px;color:#555">Exercise 5 Assembly</div>
<div class="a" style="left:449px;top:1050px;width:200.3px;height:29px;background:#fff;border-radius:4px 4px 0 0;border-bottom:2.5px solid #1e5cc0"></div>
<svg style="left:460px;top:1054px" width="19" height="19" viewBox="0 0 19 19"><path d="M1.5 6 L4 4 H9 V18 H1.5 Z M4 4 V18 M9.5 18 V3.5 L12 1.5 H17.5 V18 Z M12 1.5 V18" fill="#fff" stroke="#333" stroke-width="1.2"/></svg>
<div class="t" style="left:482px;top:1057.5px;font-size:13.7px;color:#333">Exercise 5 Part Studio</div>
<div class="a" style="left:40px;top:1049.5px;width:1879px;height:1px;background:rgba(0,0,0,0.09)"></div>

</body></html>
